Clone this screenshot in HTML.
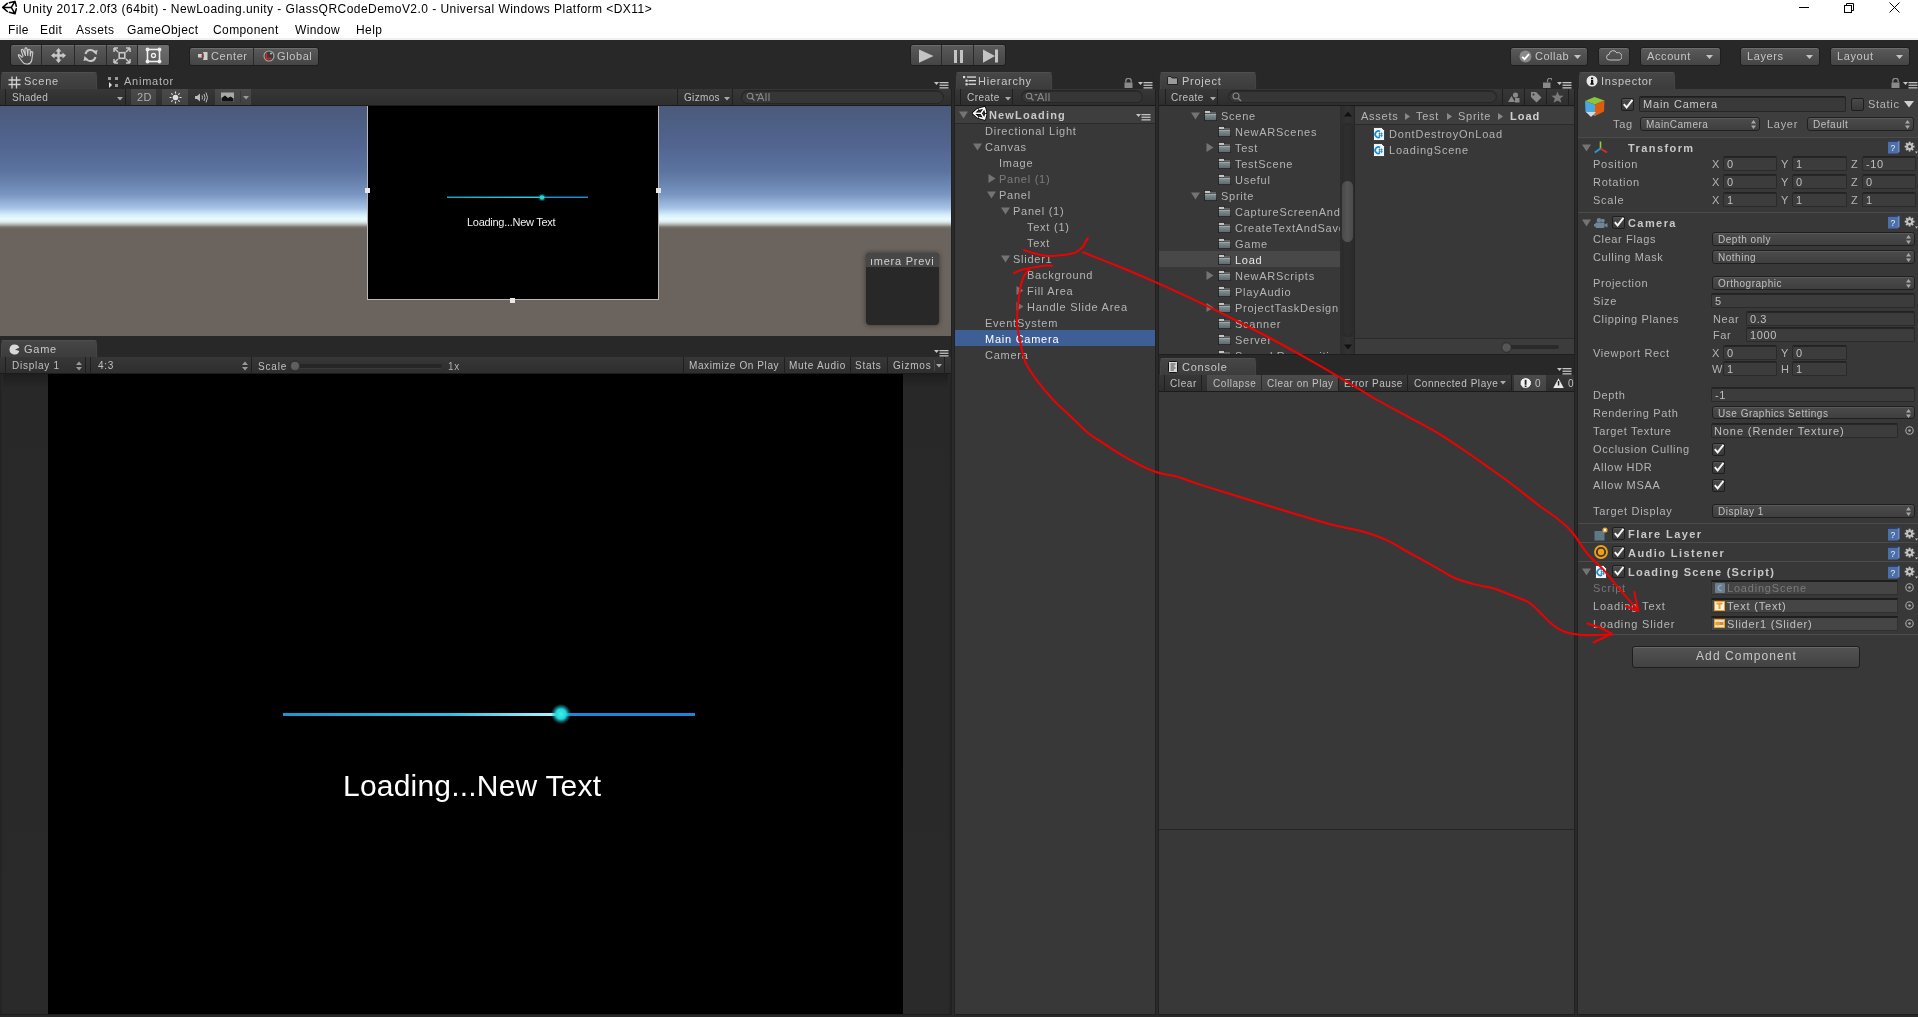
<!DOCTYPE html>
<html><head><meta charset="utf-8"><style>
*{margin:0;padding:0;box-sizing:border-box}
html,body{width:1918px;height:1017px;overflow:hidden}
body{position:relative;background:#282828;font-family:"Liberation Sans",sans-serif;}
.a{position:absolute}
.t{position:absolute;white-space:pre}
.btn{position:absolute;border:1px solid #1e1e1e;border-radius:3px;background:linear-gradient(#5a5a5a,#454545);box-shadow:inset 0 1px 0 rgba(255,255,255,0.12)}
.tab{position:absolute;height:17px;border-radius:4px 4px 0 0;background:linear-gradient(#464646,#3c3c3c);border:1px solid #2a2a2a;border-top-color:#4e4e4e;border-bottom:none;box-shadow:inset 1px 0 0 #444,inset -1px 0 0 #444}
.ptb{position:absolute;height:17px;background:linear-gradient(#373737,#2e2e2e);border-bottom:1px solid #1b1b1b}
.pbg{position:absolute;background:#383838}
.fld{position:absolute;background:#2f2f2f;border:1px solid #232323;border-radius:2px;box-shadow:inset 0 1px 0 #262626}
.pop{position:absolute;border:1px solid #1f1f1f;border-radius:3px;background:linear-gradient(#4b4b4b,#3f3f3f);box-shadow:inset 0 1px 0 rgba(255,255,255,0.08)}
</style></head><body>
<div class="a" style="left:0;top:0;width:1918px;height:1017px;overflow:hidden;will-change:transform">
<div class="a" style="left:0px;top:0px;width:1918px;height:40px;background:#fff"></div>
<div class="a" style="left:0px;top:38px;width:1918px;height:2px;background:#f0f0f0"></div>
<svg class="a" style="left:0px;top:0px;" width="20" height="16" viewBox="0 0 20 16"><path d="M2.7 7.4 L7.3 3.4 M9.3 2.7 L15 1.4 L16.3 6.2 M16.3 8.7 L15 13.8 L9.3 12.2 M7.3 11.5 L2.7 7.4 H11.3 L15 1.4 M11.3 7.4 L15 13.8" stroke="#000" stroke-width="1.5" fill="none" stroke-linecap="round" stroke-linejoin="round"/></svg>
<div class="t" style="left:23px;top:3px;font-size:12px;line-height:12px;color:#000;letter-spacing:0.46px;">Unity 2017.2.0f3 (64bit) - NewLoading.unity - GlassQRCodeDemoV2.0 - Universal Windows Platform &lt;DX11&gt;</div>
<div class="t" style="left:8px;top:24px;font-size:12px;line-height:12px;color:#000;letter-spacing:0.4px;">File</div>
<div class="t" style="left:40px;top:24px;font-size:12px;line-height:12px;color:#000;letter-spacing:0.4px;">Edit</div>
<div class="t" style="left:76px;top:24px;font-size:12px;line-height:12px;color:#000;letter-spacing:0.4px;">Assets</div>
<div class="t" style="left:127px;top:24px;font-size:12px;line-height:12px;color:#000;letter-spacing:0.4px;">GameObject</div>
<div class="t" style="left:213px;top:24px;font-size:12px;line-height:12px;color:#000;letter-spacing:0.4px;">Component</div>
<div class="t" style="left:295px;top:24px;font-size:12px;line-height:12px;color:#000;letter-spacing:0.4px;">Window</div>
<div class="t" style="left:356px;top:24px;font-size:12px;line-height:12px;color:#000;letter-spacing:0.4px;">Help</div>
<div class="a" style="left:1799px;top:7px;width:10px;height:1px;background:#000"></div>
<svg class="a" style="left:1843px;top:2px;" width="13" height="11" viewBox="0 0 13 11"><rect x="1.5" y="3.5" width="7" height="7" fill="none" stroke="#000"/><path d="M3.5 3.5 V1.5 H10.5 V8.5 H8.5" fill="none" stroke="#000"/></svg>
<svg class="a" style="left:1889px;top:2px;" width="12" height="11" viewBox="0 0 12 11"><path d="M0.5 0.5 L10.5 10.5 M10.5 0.5 L0.5 10.5" stroke="#000" stroke-width="1"/></svg>
<div class="a" style="left:0px;top:40px;width:1918px;height:32px;background:#282828"></div>
<div class="btn" style="left:10px;top:44px;width:160px;height:22px"></div>
<div class="a" style="left:138px;top:45px;width:31px;height:20px;background:linear-gradient(#6e6e6e,#5c5c5c);border-radius:0 2px 2px 0"></div>
<div class="a" style="left:41px;top:45px;width:1px;height:20px;background:#2a2a2a"></div>
<div class="a" style="left:74px;top:45px;width:1px;height:20px;background:#2a2a2a"></div>
<div class="a" style="left:106px;top:45px;width:1px;height:20px;background:#2a2a2a"></div>
<div class="a" style="left:137px;top:45px;width:1px;height:20px;background:#2a2a2a"></div>
<svg class="a" style="left:17px;top:47px;" width="17" height="18" viewBox="0 0 17 18"><path d="M5.5 10.5 L2.6 8 Q1.2 7 1.4 8.6 Q1.8 9.8 3 11.5 L5.6 15 Q7 17 9.3 17 H10.6 Q13.8 17 14.8 13 L15.8 6 Q15.8 4.5 14.8 4.6 Q14 4.7 13.8 6 L13.3 9 L13.2 3.3 Q13 2.1 12 2.2 Q11 2.3 11 3.5 L10.8 8.5 L10 1.9 Q9.8 0.8 8.8 0.9 Q7.8 1 7.9 2.2 L8.4 8.5 L6.3 3.2 Q5.8 2.2 4.9 2.5 Q4 2.9 4.4 4 L6.2 9.5" fill="none" stroke="#cfcfcf" stroke-width="1.1" stroke-linejoin="round"/></svg>
<svg class="a" style="left:50px;top:47px;" width="17" height="17" viewBox="0 0 17 17"><path d="M8.5 1 L11.5 4.5 H9.7 V7.3 H12.5 V5.5 L16 8.5 L12.5 11.5 V9.7 H9.7 V12.5 H11.5 L8.5 16 L5.5 12.5 H7.3 V9.7 H4.5 V11.5 L1 8.5 L4.5 5.5 V7.3 H7.3 V4.5 H5.5 Z" fill="#c8c8c8"/></svg>
<svg class="a" style="left:82px;top:47px;" width="17" height="17" viewBox="0 0 17 17"><path d="M3.5 7 A5.3 5.3 0 0 1 13 5.2" fill="none" stroke="#c8c8c8" stroke-width="2"/><path d="M13.5 10 A5.3 5.3 0 0 1 4 11.8" fill="none" stroke="#c8c8c8" stroke-width="2"/><path d="M10.5 4.2 L15.5 3 L14.5 8 Z M6.5 12.8 L1.5 14 L2.5 9 Z" fill="#c8c8c8"/></svg>
<svg class="a" style="left:113px;top:47px;" width="18" height="17" viewBox="0 0 18 17"><rect x="6.2" y="5.7" width="5.6" height="5.6" fill="none" stroke="#c8c8c8" stroke-width="1.6"/><path d="M1 1 H5 M1 1 V5 M17 1 H13 M17 1 V5 M1 16 H5 M1 16 V12 M17 16 H13 M17 16 V12 M1 1 L5 5 M17 1 L13 5 M1 16 L5 12 M17 16 L13 12" stroke="#c8c8c8" stroke-width="1.5"/></svg>
<svg class="a" style="left:145px;top:47px;" width="17" height="17" viewBox="0 0 17 17"><rect x="2.5" y="2.5" width="12" height="12" fill="none" stroke="#f0f0f0" stroke-width="1.6"/><circle cx="8.5" cy="8.5" r="2" fill="none" stroke="#f0f0f0" stroke-width="1.3"/><circle cx="2.5" cy="2.5" r="1.9" fill="#f0f0f0"/><circle cx="14.5" cy="2.5" r="1.9" fill="#f0f0f0"/><circle cx="2.5" cy="14.5" r="1.9" fill="#f0f0f0"/><circle cx="14.5" cy="14.5" r="1.9" fill="#f0f0f0"/></svg>
<div class="btn" style="left:189px;top:47px;width:130px;height:19px"></div>
<div class="a" style="left:253px;top:48px;width:1px;height:17px;background:#2a2a2a"></div>
<svg class="a" style="left:198px;top:52px;" width="10" height="9" viewBox="0 0 10 9"><rect x="0" y="2" width="4" height="3.5" fill="#d0d0d0"/><rect x="5" y="0" width="4.5" height="8" fill="#d0d0d0"/><rect x="5" y="0.8" width="1" height="6.4" fill="#888"/><rect x="3.6" y="2.6" width="2" height="2.4" fill="#c02020"/></svg>
<div class="t" style="left:211px;top:51px;font-size:11px;line-height:11px;color:#c4c4c4;letter-spacing:0.6px;">Center</div>
<svg class="a" style="left:263px;top:50px;" width="12" height="12" viewBox="0 0 12 12"><circle cx="6" cy="6" r="5" fill="#3a3a3a" stroke="#aaa" stroke-width="1.1"/><path d="M3.3 3 V8.5 H8.2" fill="none" stroke="#e02020" stroke-width="1.5"/><circle cx="8" cy="3.5" r="1" fill="#bbb"/></svg>
<div class="t" style="left:277px;top:51px;font-size:11px;line-height:11px;color:#c4c4c4;letter-spacing:0.6px;">Global</div>
<div class="btn" style="left:910px;top:44px;width:96px;height:22px"></div>
<div class="a" style="left:941px;top:45px;width:1px;height:20px;background:#2a2a2a"></div>
<div class="a" style="left:973px;top:45px;width:1px;height:20px;background:#2a2a2a"></div>
<svg class="a" style="left:918px;top:49px;" width="17" height="15" viewBox="0 0 17 15"><path d="M1 0.5 L15.5 7 L1 13.8 Z" fill="#c4c4c4"/></svg>
<div class="a" style="left:954px;top:50px;width:3px;height:13px;background:#c4c4c4"></div>
<div class="a" style="left:960px;top:50px;width:3px;height:13px;background:#c4c4c4"></div>
<svg class="a" style="left:982px;top:49px;" width="17" height="15" viewBox="0 0 17 15"><path d="M1 0.5 L13 7 L1 13.8 Z" fill="#c4c4c4"/><rect x="13" y="0.5" width="3" height="13" fill="#c4c4c4"/></svg>
<div class="btn" style="left:1510px;top:47px;width:78px;height:19px"></div>
<svg class="a" style="left:1519px;top:50px;" width="13" height="13" viewBox="0 0 13 13"><circle cx="6.5" cy="6.5" r="6" fill="#8a8a8a"/><path d="M3.2 6.8 L5.6 9.2 L10 4.2" fill="none" stroke="#fff" stroke-width="1.8"/></svg>
<div class="t" style="left:1535px;top:51px;font-size:11px;line-height:11px;color:#c4c4c4;letter-spacing:0.5px;">Collab</div>
<svg class="a" style="left:1574px;top:55px;" width="8" height="5" viewBox="0 0 8 5"><path d="M0 0 H7 L3.5 4 Z" fill="#c4c4c4"/></svg>
<div class="btn" style="left:1598px;top:47px;width:32px;height:19px"></div>
<svg class="a" style="left:1606px;top:50px;" width="16" height="11" viewBox="0 0 16 11"><path d="M3.5 10 a2.8 2.8 0 0 1 -0.3 -5.6 a4 4 0 0 1 7.6 -1.5 a3 3 0 0 1 2.5 7.1 Z" fill="none" stroke="#c4c4c4" stroke-width="1"/></svg>
<div class="btn" style="left:1640px;top:47px;width:81px;height:19px"></div>
<div class="t" style="left:1647px;top:51px;font-size:11px;line-height:11px;color:#c4c4c4;letter-spacing:0.6px;">Account</div>
<svg class="a" style="left:1706px;top:55px;" width="8" height="5" viewBox="0 0 8 5"><path d="M0 0 H7 L3.5 4 Z" fill="#c4c4c4"/></svg>
<div class="btn" style="left:1740px;top:47px;width:80px;height:19px"></div>
<div class="t" style="left:1747px;top:51px;font-size:11px;line-height:11px;color:#c4c4c4;letter-spacing:0.6px;">Layers</div>
<svg class="a" style="left:1806px;top:55px;" width="8" height="5" viewBox="0 0 8 5"><path d="M0 0 H7 L3.5 4 Z" fill="#c4c4c4"/></svg>
<div class="btn" style="left:1830px;top:47px;width:80px;height:19px"></div>
<div class="t" style="left:1837px;top:51px;font-size:11px;line-height:11px;color:#c4c4c4;letter-spacing:0.6px;">Layout</div>
<svg class="a" style="left:1896px;top:55px;" width="8" height="5" viewBox="0 0 8 5"><path d="M0 0 H7 L3.5 4 Z" fill="#c4c4c4"/></svg>
<div class="tab" style="left:0px;top:72px;width:98px"></div>
<svg class="a" style="left:8px;top:76px;" width="13" height="13" viewBox="0 0 13 13"><path d="M4 0.5 V12.5 M8.5 0.5 V12.5 M0.5 4 H12.5 M0.5 8.5 H12.5" stroke="#d0d0d0" stroke-width="1.3"/></svg>
<div class="t" style="left:24px;top:76px;font-size:11px;line-height:11px;color:#c8c8c8;letter-spacing:0.75px;">Scene</div>
<svg class="a" style="left:108px;top:77px;" width="11" height="12" viewBox="0 0 11 12"><rect x="0" y="0" width="3" height="3" fill="#9a9a9a"/><rect x="7" y="0" width="3" height="3" fill="#9a9a9a"/><rect x="7" y="7" width="3" height="3" fill="#9a9a9a"/><path d="M1 5 L4 8 L1 11 Z" fill="#ddd"/></svg>
<div class="t" style="left:124px;top:76px;font-size:11px;line-height:11px;color:#b8b8b8;letter-spacing:0.75px;">Animator</div>
<svg class="a" style="left:934px;top:81px;" width="15" height="8" viewBox="0 0 15 8"><path d="M0 1 H5 L2.5 4 Z" fill="#c4c4c4"/><rect x="5.5" y="1" width="9" height="1.3" fill="#c4c4c4"/><rect x="5.5" y="3.6" width="9" height="1.3" fill="#c4c4c4"/><rect x="5.5" y="6.2" width="9" height="1.3" fill="#c4c4c4"/></svg>
<div class="ptb" style="left:0;top:89px;width:951px"></div>
<div class="a" style="left:5px;top:89px;width:1px;height:17px;background:#1f1f1f"></div>
<div class="t" style="left:12px;top:93px;font-size:10px;line-height:10px;color:#c0c0c0;letter-spacing:0.25px;">Shaded</div>
<svg class="a" style="left:117px;top:97px;" width="7" height="4" viewBox="0 0 7 4"><path d="M0 0 H6 L3 3.5 Z" fill="#aaa"/></svg>
<div class="a" style="left:125px;top:89px;width:1px;height:17px;background:#1f1f1f"></div>
<div class="a" style="left:131px;top:89px;width:25px;height:16px;background:linear-gradient(#4a4a4a,#414141)"></div>
<div class="t" style="left:137px;top:92px;font-size:11px;line-height:11px;color:#b0b0b0;letter-spacing:0.5px;">2D</div>
<div class="a" style="left:162px;top:89px;width:26px;height:16px;background:linear-gradient(#4a4a4a,#414141)"></div>
<svg class="a" style="left:169px;top:91px;" width="13" height="13" viewBox="0 0 13 13"><circle cx="6.5" cy="6.5" r="2.8" fill="#e0e0e0"/><path d="M6.5 0.5 V2.5 M6.5 10.5 V12.5 M0.5 6.5 H2.5 M10.5 6.5 H12.5 M2.3 2.3 L3.7 3.7 M9.3 9.3 L10.7 10.7 M2.3 10.7 L3.7 9.3 M9.3 3.7 L10.7 2.3" stroke="#e0e0e0" stroke-width="1.2"/></svg>
<svg class="a" style="left:194px;top:91px;" width="14" height="13" viewBox="0 0 14 13"><path d="M1 5 H3 L6 2.5 V10.5 L3 8 H1 Z" fill="#bbb"/><path d="M8 4.5 Q9 6.5 8 8.5 M10 3 Q12 6.5 10 10 M12 1.5 Q15 6.5 12 11.5" fill="none" stroke="#bbb" stroke-width="1"/></svg>
<div class="a" style="left:215px;top:89px;width:36px;height:16px;background:linear-gradient(#4a4a4a,#414141)"></div>
<svg class="a" style="left:221px;top:92px;" width="13" height="10" viewBox="0 0 13 10"><rect x="0" y="0.5" width="13" height="9" fill="#a8a8a8"/><path d="M0.5 9.5 V6 L4 3.5 L7 6 L9.5 4.5 L12.5 6.5 V9.5 Z" fill="#111"/></svg>
<div class="a" style="left:240px;top:91px;width:1px;height:12px;background:#383838"></div>
<svg class="a" style="left:243px;top:96px;" width="7" height="4" viewBox="0 0 7 4"><path d="M0 0 H6 L3 3.5 Z" fill="#999"/></svg>
<div class="a" style="left:677px;top:89px;width:1px;height:17px;background:#1f1f1f"></div>
<div class="t" style="left:684px;top:93px;font-size:10px;line-height:10px;color:#c0c0c0;letter-spacing:0.33px;">Gizmos</div>
<svg class="a" style="left:724px;top:97px;" width="7" height="4" viewBox="0 0 7 4"><path d="M0 0 H6 L3 3.5 Z" fill="#aaa"/></svg>
<div class="a" style="left:732px;top:89px;width:1px;height:17px;background:#1f1f1f"></div>
<div class="a" style="left:741px;top:90px;width:203px;height:14px;background:#363636;border:1px solid #262626;border-radius:7px;box-shadow:inset 0 1px 0 #2a2a2a"></div>
<svg class="a" style="left:746px;top:92px;" width="13" height="9" viewBox="0 0 13 9"><circle cx="4" cy="4" r="2.8" fill="none" stroke="#888" stroke-width="1.1"/><path d="M6 6 L8.5 8.5" stroke="#888" stroke-width="1.3"/><path d="M9 2 H13 L11 4 Z" fill="#888"/></svg>
<div class="t" style="left:757px;top:92px;font-size:11px;line-height:11px;color:#8c8c8c;letter-spacing:0.5px;">All</div>
<div class="a" style="left:0px;top:106px;width:951px;height:230px;background:#6b635d"></div>
<div class="a" style="left:0px;top:106px;width:951px;height:124px;background:linear-gradient(#4a5a7b 0px,#526590 40px,#5c74a0 66px,#7894c0 88px,#a6c3e6 102px,#d6effb 109px,#e8fdff 113px,#dceaec 116px,#a8aaa8 119px,#7a726c 121px,#6b635d 123px)"></div>
<div class="a" style="left:367px;top:106px;width:292px;height:194px;background:#000;border:1px solid #b8b8b8;border-top:none"></div>
<div class="a" style="left:365px;top:188px;width:5px;height:5px;background:#e8e8e8"></div>
<div class="a" style="left:656px;top:188px;width:5px;height:5px;background:#e8e8e8"></div>
<div class="a" style="left:510px;top:298px;width:5px;height:5px;background:#e8e8e8"></div>
<div class="a" style="left:447px;top:197px;width:141px;height:1px;background:linear-gradient(90deg,#16a6c8,#2bd0e8 90px,#1e8fd0 96px,#1e8fd0)"></div>
<div class="a" style="left:447px;top:196px;width:141px;height:1px;opacity:0.45;background:linear-gradient(90deg,#16a6c8,#2bd0e8 90px,#1e8fd0 96px,#1e8fd0)"></div>
<svg class="a" style="left:538px;top:193px;" width="8" height="9" viewBox="0 0 8 9"><circle cx="4" cy="4.5" r="2.3" fill="#30e0e0"/><circle cx="4" cy="4.5" r="3.6" fill="#20c0c0" opacity="0.35"/></svg>
<div class="t" style="left:467px;top:217px;font-size:11px;line-height:11px;color:#f0f0f0;letter-spacing:-0.28px;">Loading...New Text</div>
<div class="a" style="left:866px;top:253px;width:73px;height:72px;background:#282828;border-radius:4px;box-shadow:0 0 4px 1px rgba(0,0,0,0.35)"></div>
<div class="a" style="left:866px;top:253px;width:73px;height:14px;background:#474747;border-radius:4px 4px 0 0"></div>
<div class="t" style="left:870px;top:256px;font-size:11px;line-height:11px;color:#d0d0d0;letter-spacing:0.75px;">ımera Previ</div>
<div class="tab" style="left:0px;top:340px;width:98px"></div>
<svg class="a" style="left:9px;top:344px;" width="11" height="11" viewBox="0 0 11 11"><path d="M5.5 0.5 A5 5 0 1 0 10.3 7 L6 5.5 L10.3 3.8 A5 5 0 0 0 5.5 0.5 Z" fill="#d8d8d8"/></svg>
<div class="t" style="left:24px;top:344px;font-size:11px;line-height:11px;color:#c8c8c8;letter-spacing:0.75px;">Game</div>
<svg class="a" style="left:934px;top:349px;" width="15" height="8" viewBox="0 0 15 8"><path d="M0 1 H5 L2.5 4 Z" fill="#c4c4c4"/><rect x="5.5" y="1" width="9" height="1.3" fill="#c4c4c4"/><rect x="5.5" y="3.6" width="9" height="1.3" fill="#c4c4c4"/><rect x="5.5" y="6.2" width="9" height="1.3" fill="#c4c4c4"/></svg>
<div class="ptb" style="left:0;top:357px;width:951px"></div>
<div class="a" style="left:5px;top:357px;width:1px;height:17px;background:#1f1f1f"></div>
<div class="t" style="left:12px;top:361px;font-size:10px;line-height:10px;color:#c0c0c0;letter-spacing:0.75px;">Display 1</div>
<svg class="a" style="left:76px;top:361px;" width="6" height="10" viewBox="0 0 6 10"><path d="M0 4 L3 0.5 L6 4 Z M0 6 L3 9.5 L6 6 Z" fill="#999"/></svg>
<div class="a" style="left:85px;top:357px;width:1px;height:17px;background:#1f1f1f"></div>
<div class="a" style="left:90px;top:357px;width:1px;height:17px;background:#1f1f1f"></div>
<div class="t" style="left:98px;top:361px;font-size:10px;line-height:10px;color:#c0c0c0;letter-spacing:0.75px;">4:3</div>
<svg class="a" style="left:242px;top:361px;" width="6" height="10" viewBox="0 0 6 10"><path d="M0 4 L3 0.5 L6 4 Z M0 6 L3 9.5 L6 6 Z" fill="#999"/></svg>
<div class="a" style="left:251px;top:357px;width:1px;height:17px;background:#1f1f1f"></div>
<div class="t" style="left:258px;top:362px;font-size:10px;line-height:10px;color:#c0c0c0;letter-spacing:0.85px;">Scale</div>
<div class="a" style="left:293px;top:364px;width:149px;height:4px;background:#262626;border-radius:2px;box-shadow:0 1px 0 #3a3a3a"></div>
<svg class="a" style="left:289px;top:360px;" width="12" height="12" viewBox="0 0 12 12"><circle cx="6" cy="6" r="5" fill="#575757" stroke="#262626"/><circle cx="6" cy="5.5" r="3.5" fill="#5f5f5f"/></svg>
<div class="t" style="left:448px;top:362px;font-size:10px;line-height:10px;color:#b0b0b0;letter-spacing:0.6px;">1x</div>
<div class="a" style="left:683px;top:357px;width:1px;height:17px;background:#1f1f1f"></div>
<div class="a" style="left:784px;top:357px;width:1px;height:17px;background:#1f1f1f"></div>
<div class="a" style="left:850px;top:357px;width:1px;height:17px;background:#1f1f1f"></div>
<div class="a" style="left:887px;top:357px;width:1px;height:17px;background:#1f1f1f"></div>
<div class="a" style="left:934px;top:360px;width:1px;height:11px;background:#4a4a4a"></div>
<div class="t" style="left:689px;top:361px;font-size:10px;line-height:10px;color:#c0c0c0;letter-spacing:0.6px;">Maximize On Play</div>
<div class="t" style="left:789px;top:361px;font-size:10px;line-height:10px;color:#c0c0c0;letter-spacing:0.7px;">Mute Audio</div>
<div class="t" style="left:855px;top:361px;font-size:10px;line-height:10px;color:#c0c0c0;letter-spacing:0.75px;">Stats</div>
<div class="t" style="left:893px;top:361px;font-size:10px;line-height:10px;color:#c0c0c0;letter-spacing:0.75px;">Gizmos</div>
<svg class="a" style="left:936px;top:364px;" width="7" height="4" viewBox="0 0 7 4"><path d="M0 0 H6 L3 3.5 Z" fill="#aaa"/></svg>
<div class="a" style="left:944px;top:357px;width:1px;height:17px;background:#1f1f1f"></div>
<div class="a" style="left:0px;top:374px;width:951px;height:640px;background:linear-gradient(#1e1e1e,#282828 14px,#2a2a2a)"></div>
<div class="a" style="left:0px;top:374px;width:3px;height:640px;background:linear-gradient(90deg,#222,#2a2a2a)"></div>
<div class="a" style="left:948px;top:374px;width:3px;height:640px;background:linear-gradient(90deg,#2a2a2a,#222)"></div>
<div class="a" style="left:48px;top:374px;width:855px;height:640px;background:#000"></div>
<div class="a" style="left:0px;top:1014px;width:951px;height:1px;background:#1e1e1e"></div>
<div class="a" style="left:283px;top:713px;width:278px;height:3px;background:linear-gradient(90deg,#1898d0,#2cc0e8 60%,#a8f4ff 97%,#6ff 100%)"></div>
<div class="a" style="left:561px;top:713px;width:134px;height:3px;background:#1e86d8"></div>
<div class="a" style="left:551px;top:704px;width:20px;height:20px;border-radius:50%;background:radial-gradient(circle,#3ff0f0 0,#22d8d8 35%,rgba(20,180,200,0.45) 55%,rgba(0,0,0,0) 72%)"></div>
<div class="t" style="left:343px;top:771px;font-size:30px;line-height:30px;color:#ffffff;letter-spacing:0.2px;">Loading...New Text</div>
<div class="a" style="left:951px;top:89px;width:4px;height:926px;background:#2a2a2a"></div>
<div class="a" style="left:951px;top:89px;width:1px;height:926px;background:#202020"></div>
<div class="a" style="left:954px;top:89px;width:1px;height:926px;background:#202020"></div>
<div class="tab" style="left:955px;top:72px;width:98px"></div>
<svg class="a" style="left:963px;top:76px;" width="13" height="10" viewBox="0 0 13 10"><rect x="0" y="0" width="2.2" height="2.2" fill="#ddd"/><rect x="2.5" y="3.6" width="2.2" height="2.2" fill="#ddd"/><rect x="2.5" y="7.2" width="2.2" height="2.2" fill="#ddd"/><rect x="4" y="0.4" width="9" height="1.3" fill="#ddd"/><rect x="5.5" y="4" width="7.5" height="1.3" fill="#ddd"/><rect x="5.5" y="7.6" width="7.5" height="1.3" fill="#ddd"/></svg>
<div class="t" style="left:978px;top:76px;font-size:11px;line-height:11px;color:#c8c8c8;letter-spacing:0.75px;">Hierarchy</div>
<svg class="a" style="left:1124px;top:78px;" width="9" height="10" viewBox="0 0 9 10"><path d="M1.8 4.5 V3 a2.7 2.7 0 0 1 5.4 0 V4.5" fill="none" stroke="#8a8a8a" stroke-width="1.3"/><rect x="0.5" y="4.5" width="8" height="5.5" fill="#8a8a8a"/></svg>
<svg class="a" style="left:1138px;top:81px;" width="15" height="8" viewBox="0 0 15 8"><path d="M0 1 H5 L2.5 4 Z" fill="#c4c4c4"/><rect x="5.5" y="1" width="9" height="1.3" fill="#c4c4c4"/><rect x="5.5" y="3.6" width="9" height="1.3" fill="#c4c4c4"/><rect x="5.5" y="6.2" width="9" height="1.3" fill="#c4c4c4"/></svg>
<div class="ptb" style="left:955px;top:89px;width:200px"></div>
<div class="a" style="left:960px;top:89px;width:1px;height:17px;background:#1f1f1f"></div>
<div class="a" style="left:1012px;top:89px;width:1px;height:17px;background:#1f1f1f"></div>
<div class="t" style="left:967px;top:93px;font-size:10px;line-height:10px;color:#c0c0c0;letter-spacing:0.47px;">Create</div>
<svg class="a" style="left:1005px;top:97px;" width="7" height="4" viewBox="0 0 7 4"><path d="M0 0 H6 L3 3.5 Z" fill="#aaa"/></svg>
<div class="a" style="left:1021px;top:90px;width:122px;height:13px;background:#363636;border:1px solid #262626;border-radius:7px;box-shadow:inset 0 1px 0 #2a2a2a"></div>
<svg class="a" style="left:1025px;top:92px;" width="13" height="9" viewBox="0 0 13 9"><circle cx="4" cy="4" r="2.8" fill="none" stroke="#888" stroke-width="1.1"/><path d="M6 6 L8.5 8.5" stroke="#888" stroke-width="1.3"/><path d="M9 2 H13 L11 4 Z" fill="#888"/></svg>
<div class="t" style="left:1037px;top:92px;font-size:11px;line-height:11px;color:#8c8c8c;letter-spacing:0.5px;">All</div>
<div class="a" style="left:955px;top:106px;width:200px;height:908px;background:#383838"></div>
<div class="a" style="left:955px;top:1014px;width:200px;height:1px;background:#1e1e1e"></div>
<div class="a" style="left:955px;top:106px;width:200px;height:17px;background:#3e3e3e"></div>
<div class="a" style="left:955px;top:123px;width:200px;height:1px;background:#2a2a2a"></div>
<svg class="a" style="left:959px;top:111px;" width="9" height="8" viewBox="0 0 9 8"><path d="M0 0.5 H9 L4.5 7.5 Z" fill="#747474"/></svg>
<svg class="a" style="left:971px;top:106px;" width="17" height="16" viewBox="0 0 17 16"><g fill="none" stroke-linecap="round" stroke-linejoin="round" transform="translate(0,0.6) scale(0.9)"><path d="M2.7 7.4 L7.3 3.4 M9.3 2.7 L15 1.4 L16.3 6.2 M16.3 8.7 L15 13.8 L9.3 12.2 M7.3 11.5 L2.7 7.4 H11.3 L15 1.4 M11.3 7.4 L15 13.8" stroke="#000" stroke-width="3.4"/><path d="M2.7 7.4 L7.3 3.4 M9.3 2.7 L15 1.4 L16.3 6.2 M16.3 8.7 L15 13.8 L9.3 12.2 M7.3 11.5 L2.7 7.4 H11.3 L15 1.4 M11.3 7.4 L15 13.8" stroke="#fff" stroke-width="1.7"/></g></svg>
<div class="t" style="left:989px;top:110px;font-size:11px;line-height:11px;color:#c8c8c8;letter-spacing:1.15px;font-weight:bold;">NewLoading</div>
<svg class="a" style="left:1136px;top:113px;" width="15" height="8" viewBox="0 0 15 8"><path d="M0 1 H5 L2.5 4 Z" fill="#c4c4c4"/><rect x="5.5" y="1" width="9" height="1.3" fill="#c4c4c4"/><rect x="5.5" y="3.6" width="9" height="1.3" fill="#c4c4c4"/><rect x="5.5" y="6.2" width="9" height="1.3" fill="#c4c4c4"/></svg>
<div class="t" style="left:985px;top:126px;font-size:11px;line-height:11px;color:#b4b4b4;letter-spacing:0.75px;">Directional Light</div>
<svg class="a" style="left:973px;top:143px;" width="9" height="8" viewBox="0 0 9 8"><path d="M0 0.5 H9 L4.5 7.5 Z" fill="#747474"/></svg>
<div class="t" style="left:985px;top:142px;font-size:11px;line-height:11px;color:#b4b4b4;letter-spacing:0.75px;">Canvas</div>
<div class="t" style="left:999px;top:158px;font-size:11px;line-height:11px;color:#b4b4b4;letter-spacing:0.75px;">Image</div>
<svg class="a" style="left:988px;top:174px;" width="8" height="9" viewBox="0 0 8 9"><path d="M0.5 0 L7.5 4.5 L0.5 9 Z" fill="#747474"/></svg>
<div class="t" style="left:999px;top:174px;font-size:11px;line-height:11px;color:#7c7c7c;letter-spacing:0.75px;">Panel (1)</div>
<svg class="a" style="left:987px;top:191px;" width="9" height="8" viewBox="0 0 9 8"><path d="M0 0.5 H9 L4.5 7.5 Z" fill="#747474"/></svg>
<div class="t" style="left:999px;top:190px;font-size:11px;line-height:11px;color:#b4b4b4;letter-spacing:0.75px;">Panel</div>
<svg class="a" style="left:1001px;top:207px;" width="9" height="8" viewBox="0 0 9 8"><path d="M0 0.5 H9 L4.5 7.5 Z" fill="#747474"/></svg>
<div class="t" style="left:1013px;top:206px;font-size:11px;line-height:11px;color:#b4b4b4;letter-spacing:0.75px;">Panel (1)</div>
<div class="t" style="left:1027px;top:222px;font-size:11px;line-height:11px;color:#b4b4b4;letter-spacing:0.75px;">Text (1)</div>
<div class="t" style="left:1027px;top:238px;font-size:11px;line-height:11px;color:#b4b4b4;letter-spacing:0.75px;">Text</div>
<svg class="a" style="left:1001px;top:255px;" width="9" height="8" viewBox="0 0 9 8"><path d="M0 0.5 H9 L4.5 7.5 Z" fill="#747474"/></svg>
<div class="t" style="left:1013px;top:254px;font-size:11px;line-height:11px;color:#b4b4b4;letter-spacing:0.75px;">Slider1</div>
<div class="t" style="left:1027px;top:270px;font-size:11px;line-height:11px;color:#b4b4b4;letter-spacing:0.75px;">Background</div>
<svg class="a" style="left:1016px;top:286px;" width="8" height="9" viewBox="0 0 8 9"><path d="M0.5 0 L7.5 4.5 L0.5 9 Z" fill="#747474"/></svg>
<div class="t" style="left:1027px;top:286px;font-size:11px;line-height:11px;color:#b4b4b4;letter-spacing:0.75px;">Fill Area</div>
<svg class="a" style="left:1016px;top:302px;" width="8" height="9" viewBox="0 0 8 9"><path d="M0.5 0 L7.5 4.5 L0.5 9 Z" fill="#747474"/></svg>
<div class="t" style="left:1027px;top:302px;font-size:11px;line-height:11px;color:#b4b4b4;letter-spacing:0.75px;">Handle Slide Area</div>
<div class="t" style="left:985px;top:318px;font-size:11px;line-height:11px;color:#b4b4b4;letter-spacing:0.75px;">EventSystem</div>
<div class="a" style="left:955px;top:330px;width:200px;height:16px;background:#3d5f96"></div>
<div class="t" style="left:985px;top:334px;font-size:11px;line-height:11px;color:#ffffff;letter-spacing:0.75px;">Main Camera</div>
<div class="t" style="left:985px;top:350px;font-size:11px;line-height:11px;color:#b4b4b4;letter-spacing:0.75px;">Camera</div>
<div class="a" style="left:1155px;top:89px;width:4px;height:926px;background:#2a2a2a"></div>
<div class="a" style="left:1155px;top:89px;width:1px;height:926px;background:#202020"></div>
<div class="a" style="left:1158px;top:89px;width:1px;height:926px;background:#202020"></div>
<div class="tab" style="left:1159px;top:72px;width:98px"></div>
<svg class="a" style="left:1167px;top:76px;" width="11" height="9" viewBox="0 0 11 9"><path d="M0.5 1.5 a1 1 0 0 1 1 -1 H4 L5 2 H10 a0.5 0.5 0 0 1 0.5 0.5 V8.5 H0.5 Z" fill="#9a9a9a" stroke="#111" stroke-width="0.8"/></svg>
<div class="t" style="left:1182px;top:76px;font-size:11px;line-height:11px;color:#c8c8c8;letter-spacing:0.75px;">Project</div>
<svg class="a" style="left:1543px;top:78px;" width="9" height="10" viewBox="0 0 9 10"><path d="M4.5 4 V2.5 a2.3 2.3 0 0 1 4.6 0" fill="none" stroke="#8a8a8a" stroke-width="1.2"/><rect x="0" y="4.5" width="7.5" height="5.5" fill="#8a8a8a"/></svg>
<svg class="a" style="left:1557px;top:81px;" width="15" height="8" viewBox="0 0 15 8"><path d="M0 1 H5 L2.5 4 Z" fill="#c4c4c4"/><rect x="5.5" y="1" width="9" height="1.3" fill="#c4c4c4"/><rect x="5.5" y="3.6" width="9" height="1.3" fill="#c4c4c4"/><rect x="5.5" y="6.2" width="9" height="1.3" fill="#c4c4c4"/></svg>
<div class="ptb" style="left:1159px;top:89px;width:415px"></div>
<div class="a" style="left:1165px;top:89px;width:1px;height:17px;background:#1f1f1f"></div>
<div class="a" style="left:1217px;top:89px;width:1px;height:17px;background:#1f1f1f"></div>
<div class="t" style="left:1171px;top:93px;font-size:10px;line-height:10px;color:#c0c0c0;letter-spacing:0.47px;">Create</div>
<svg class="a" style="left:1210px;top:97px;" width="7" height="4" viewBox="0 0 7 4"><path d="M0 0 H6 L3 3.5 Z" fill="#aaa"/></svg>
<div class="a" style="left:1228px;top:90px;width:269px;height:13px;background:#363636;border:1px solid #262626;border-radius:7px;box-shadow:inset 0 1px 0 #2a2a2a"></div>
<svg class="a" style="left:1232px;top:92px;" width="10" height="10" viewBox="0 0 10 10"><circle cx="4" cy="4" r="3" fill="none" stroke="#888" stroke-width="1.1"/><path d="M6.2 6.2 L9 9" stroke="#888" stroke-width="1.4"/></svg>
<div class="a" style="left:1502px;top:89px;width:1px;height:17px;background:#1f1f1f"></div>
<div class="a" style="left:1524px;top:89px;width:1px;height:17px;background:#1f1f1f"></div>
<div class="a" style="left:1546px;top:89px;width:1px;height:17px;background:#1f1f1f"></div>
<div class="a" style="left:1568px;top:89px;width:1px;height:17px;background:#1f1f1f"></div>
<svg class="a" style="left:1508px;top:92px;" width="12" height="11" viewBox="0 0 12 11"><path d="M0 10 L3.5 4 L7 10 Z" fill="#8a8a8a"/><circle cx="7.5" cy="3" r="2.6" fill="#8a8a8a"/><rect x="7" y="6" width="4.5" height="4.5" fill="#8a8a8a"/></svg>
<svg class="a" style="left:1530px;top:91px;" width="12" height="12" viewBox="0 0 12 12"><path d="M1 1 H6 L11.5 6.5 L6.5 11.5 L1 6 Z" fill="#8a8a8a"/><circle cx="3.5" cy="3.5" r="1" fill="#2e2e2e"/></svg>
<svg class="a" style="left:1551px;top:91px;" width="13" height="12" viewBox="0 0 13 12"><path d="M6.5 0.5 L8.2 4.6 L12.6 4.8 L9.2 7.6 L10.4 11.8 L6.5 9.4 L2.6 11.8 L3.8 7.6 L0.4 4.8 L4.8 4.6 Z" fill="#7a7a7a"/></svg>
<div class="a" style="left:1159px;top:106px;width:415px;height:248px;background:#383838"></div>
<div class="a" style="left:1159px;top:106px;width:181px;height:248px;overflow:hidden">
<svg class="a" style="left:32px;top:6px;" width="9" height="8" viewBox="0 0 9 8"><path d="M0 0.5 H9 L4.5 7.5 Z" fill="#747474"/></svg>
<svg class="a" style="left:44px;top:3px;" width="15" height="13" viewBox="0 0 15 13"><defs><linearGradient id="fg" x1="0" y1="0" x2="0" y2="1"><stop offset="0" stop-color="#7f8d91"/><stop offset="1" stop-color="#5d696c"/></linearGradient></defs><path d="M1 2 Q1 1 2 1 H7 Q8 1 8 2 V3 H13 Q14 3 14 4 V11 Q14 12 13 12 H2 Q1 12 1 11 Z" fill="#141414"/><rect x="1.8" y="1.8" width="5.4" height="2.6" fill="#c4c4c4"/><rect x="7.2" y="3.6" width="6.1" height="1" fill="#d6d6d6"/><rect x="1.8" y="4.4" width="11.5" height="0.7" fill="#3c4446"/><rect x="1.8" y="5.1" width="11.5" height="0.9" fill="#a8b8bc"/><rect x="1.8" y="6" width="11.5" height="5.3" fill="url(#fg)"/></svg>
<div class="t" style="left:62px;top:5px;font-size:11px;line-height:11px;color:#b4b4b4;letter-spacing:0.75px;">Scene</div>
<svg class="a" style="left:58px;top:19px;" width="15" height="13" viewBox="0 0 15 13"><defs><linearGradient id="fg" x1="0" y1="0" x2="0" y2="1"><stop offset="0" stop-color="#7f8d91"/><stop offset="1" stop-color="#5d696c"/></linearGradient></defs><path d="M1 2 Q1 1 2 1 H7 Q8 1 8 2 V3 H13 Q14 3 14 4 V11 Q14 12 13 12 H2 Q1 12 1 11 Z" fill="#141414"/><rect x="1.8" y="1.8" width="5.4" height="2.6" fill="#c4c4c4"/><rect x="7.2" y="3.6" width="6.1" height="1" fill="#d6d6d6"/><rect x="1.8" y="4.4" width="11.5" height="0.7" fill="#3c4446"/><rect x="1.8" y="5.1" width="11.5" height="0.9" fill="#a8b8bc"/><rect x="1.8" y="6" width="11.5" height="5.3" fill="url(#fg)"/></svg>
<div class="t" style="left:76px;top:21px;font-size:11px;line-height:11px;color:#b4b4b4;letter-spacing:0.75px;">NewARScenes</div>
<svg class="a" style="left:47px;top:37px;" width="8" height="9" viewBox="0 0 8 9"><path d="M0.5 0 L7.5 4.5 L0.5 9 Z" fill="#747474"/></svg>
<svg class="a" style="left:58px;top:35px;" width="15" height="13" viewBox="0 0 15 13"><defs><linearGradient id="fg" x1="0" y1="0" x2="0" y2="1"><stop offset="0" stop-color="#7f8d91"/><stop offset="1" stop-color="#5d696c"/></linearGradient></defs><path d="M1 2 Q1 1 2 1 H7 Q8 1 8 2 V3 H13 Q14 3 14 4 V11 Q14 12 13 12 H2 Q1 12 1 11 Z" fill="#141414"/><rect x="1.8" y="1.8" width="5.4" height="2.6" fill="#c4c4c4"/><rect x="7.2" y="3.6" width="6.1" height="1" fill="#d6d6d6"/><rect x="1.8" y="4.4" width="11.5" height="0.7" fill="#3c4446"/><rect x="1.8" y="5.1" width="11.5" height="0.9" fill="#a8b8bc"/><rect x="1.8" y="6" width="11.5" height="5.3" fill="url(#fg)"/></svg>
<div class="t" style="left:76px;top:37px;font-size:11px;line-height:11px;color:#b4b4b4;letter-spacing:0.75px;">Test</div>
<svg class="a" style="left:58px;top:51px;" width="15" height="13" viewBox="0 0 15 13"><defs><linearGradient id="fg" x1="0" y1="0" x2="0" y2="1"><stop offset="0" stop-color="#7f8d91"/><stop offset="1" stop-color="#5d696c"/></linearGradient></defs><path d="M1 2 Q1 1 2 1 H7 Q8 1 8 2 V3 H13 Q14 3 14 4 V11 Q14 12 13 12 H2 Q1 12 1 11 Z" fill="#141414"/><rect x="1.8" y="1.8" width="5.4" height="2.6" fill="#c4c4c4"/><rect x="7.2" y="3.6" width="6.1" height="1" fill="#d6d6d6"/><rect x="1.8" y="4.4" width="11.5" height="0.7" fill="#3c4446"/><rect x="1.8" y="5.1" width="11.5" height="0.9" fill="#a8b8bc"/><rect x="1.8" y="6" width="11.5" height="5.3" fill="url(#fg)"/></svg>
<div class="t" style="left:76px;top:53px;font-size:11px;line-height:11px;color:#b4b4b4;letter-spacing:0.75px;">TestScene</div>
<svg class="a" style="left:58px;top:67px;" width="15" height="13" viewBox="0 0 15 13"><defs><linearGradient id="fg" x1="0" y1="0" x2="0" y2="1"><stop offset="0" stop-color="#7f8d91"/><stop offset="1" stop-color="#5d696c"/></linearGradient></defs><path d="M1 2 Q1 1 2 1 H7 Q8 1 8 2 V3 H13 Q14 3 14 4 V11 Q14 12 13 12 H2 Q1 12 1 11 Z" fill="#141414"/><rect x="1.8" y="1.8" width="5.4" height="2.6" fill="#c4c4c4"/><rect x="7.2" y="3.6" width="6.1" height="1" fill="#d6d6d6"/><rect x="1.8" y="4.4" width="11.5" height="0.7" fill="#3c4446"/><rect x="1.8" y="5.1" width="11.5" height="0.9" fill="#a8b8bc"/><rect x="1.8" y="6" width="11.5" height="5.3" fill="url(#fg)"/></svg>
<div class="t" style="left:76px;top:69px;font-size:11px;line-height:11px;color:#b4b4b4;letter-spacing:0.75px;">Useful</div>
<svg class="a" style="left:32px;top:86px;" width="9" height="8" viewBox="0 0 9 8"><path d="M0 0.5 H9 L4.5 7.5 Z" fill="#747474"/></svg>
<svg class="a" style="left:44px;top:83px;" width="15" height="13" viewBox="0 0 15 13"><defs><linearGradient id="fg" x1="0" y1="0" x2="0" y2="1"><stop offset="0" stop-color="#7f8d91"/><stop offset="1" stop-color="#5d696c"/></linearGradient></defs><path d="M1 2 Q1 1 2 1 H7 Q8 1 8 2 V3 H13 Q14 3 14 4 V11 Q14 12 13 12 H2 Q1 12 1 11 Z" fill="#141414"/><rect x="1.8" y="1.8" width="5.4" height="2.6" fill="#c4c4c4"/><rect x="7.2" y="3.6" width="6.1" height="1" fill="#d6d6d6"/><rect x="1.8" y="4.4" width="11.5" height="0.7" fill="#3c4446"/><rect x="1.8" y="5.1" width="11.5" height="0.9" fill="#a8b8bc"/><rect x="1.8" y="6" width="11.5" height="5.3" fill="url(#fg)"/></svg>
<div class="t" style="left:62px;top:85px;font-size:11px;line-height:11px;color:#b4b4b4;letter-spacing:0.75px;">Sprite</div>
<svg class="a" style="left:58px;top:99px;" width="15" height="13" viewBox="0 0 15 13"><defs><linearGradient id="fg" x1="0" y1="0" x2="0" y2="1"><stop offset="0" stop-color="#7f8d91"/><stop offset="1" stop-color="#5d696c"/></linearGradient></defs><path d="M1 2 Q1 1 2 1 H7 Q8 1 8 2 V3 H13 Q14 3 14 4 V11 Q14 12 13 12 H2 Q1 12 1 11 Z" fill="#141414"/><rect x="1.8" y="1.8" width="5.4" height="2.6" fill="#c4c4c4"/><rect x="7.2" y="3.6" width="6.1" height="1" fill="#d6d6d6"/><rect x="1.8" y="4.4" width="11.5" height="0.7" fill="#3c4446"/><rect x="1.8" y="5.1" width="11.5" height="0.9" fill="#a8b8bc"/><rect x="1.8" y="6" width="11.5" height="5.3" fill="url(#fg)"/></svg>
<div class="t" style="left:76px;top:101px;font-size:11px;line-height:11px;color:#b4b4b4;letter-spacing:0.75px;">CaptureScreenAndSave</div>
<svg class="a" style="left:58px;top:115px;" width="15" height="13" viewBox="0 0 15 13"><defs><linearGradient id="fg" x1="0" y1="0" x2="0" y2="1"><stop offset="0" stop-color="#7f8d91"/><stop offset="1" stop-color="#5d696c"/></linearGradient></defs><path d="M1 2 Q1 1 2 1 H7 Q8 1 8 2 V3 H13 Q14 3 14 4 V11 Q14 12 13 12 H2 Q1 12 1 11 Z" fill="#141414"/><rect x="1.8" y="1.8" width="5.4" height="2.6" fill="#c4c4c4"/><rect x="7.2" y="3.6" width="6.1" height="1" fill="#d6d6d6"/><rect x="1.8" y="4.4" width="11.5" height="0.7" fill="#3c4446"/><rect x="1.8" y="5.1" width="11.5" height="0.9" fill="#a8b8bc"/><rect x="1.8" y="6" width="11.5" height="5.3" fill="url(#fg)"/></svg>
<div class="t" style="left:76px;top:117px;font-size:11px;line-height:11px;color:#b4b4b4;letter-spacing:0.75px;">CreateTextAndSave</div>
<svg class="a" style="left:58px;top:131px;" width="15" height="13" viewBox="0 0 15 13"><defs><linearGradient id="fg" x1="0" y1="0" x2="0" y2="1"><stop offset="0" stop-color="#7f8d91"/><stop offset="1" stop-color="#5d696c"/></linearGradient></defs><path d="M1 2 Q1 1 2 1 H7 Q8 1 8 2 V3 H13 Q14 3 14 4 V11 Q14 12 13 12 H2 Q1 12 1 11 Z" fill="#141414"/><rect x="1.8" y="1.8" width="5.4" height="2.6" fill="#c4c4c4"/><rect x="7.2" y="3.6" width="6.1" height="1" fill="#d6d6d6"/><rect x="1.8" y="4.4" width="11.5" height="0.7" fill="#3c4446"/><rect x="1.8" y="5.1" width="11.5" height="0.9" fill="#a8b8bc"/><rect x="1.8" y="6" width="11.5" height="5.3" fill="url(#fg)"/></svg>
<div class="t" style="left:76px;top:133px;font-size:11px;line-height:11px;color:#b4b4b4;letter-spacing:0.75px;">Game</div>
<div class="a" style="left:0px;top:145px;width:181px;height:16px;background:#484848"></div>
<svg class="a" style="left:58px;top:147px;" width="15" height="13" viewBox="0 0 15 13"><defs><linearGradient id="fg" x1="0" y1="0" x2="0" y2="1"><stop offset="0" stop-color="#7f8d91"/><stop offset="1" stop-color="#5d696c"/></linearGradient></defs><path d="M1 2 Q1 1 2 1 H7 Q8 1 8 2 V3 H13 Q14 3 14 4 V11 Q14 12 13 12 H2 Q1 12 1 11 Z" fill="#141414"/><rect x="1.8" y="1.8" width="5.4" height="2.6" fill="#c4c4c4"/><rect x="7.2" y="3.6" width="6.1" height="1" fill="#d6d6d6"/><rect x="1.8" y="4.4" width="11.5" height="0.7" fill="#3c4446"/><rect x="1.8" y="5.1" width="11.5" height="0.9" fill="#a8b8bc"/><rect x="1.8" y="6" width="11.5" height="5.3" fill="url(#fg)"/></svg>
<div class="t" style="left:76px;top:149px;font-size:11px;line-height:11px;color:#e8e8e8;letter-spacing:0.75px;">Load</div>
<svg class="a" style="left:47px;top:165px;" width="8" height="9" viewBox="0 0 8 9"><path d="M0.5 0 L7.5 4.5 L0.5 9 Z" fill="#747474"/></svg>
<svg class="a" style="left:58px;top:163px;" width="15" height="13" viewBox="0 0 15 13"><defs><linearGradient id="fg" x1="0" y1="0" x2="0" y2="1"><stop offset="0" stop-color="#7f8d91"/><stop offset="1" stop-color="#5d696c"/></linearGradient></defs><path d="M1 2 Q1 1 2 1 H7 Q8 1 8 2 V3 H13 Q14 3 14 4 V11 Q14 12 13 12 H2 Q1 12 1 11 Z" fill="#141414"/><rect x="1.8" y="1.8" width="5.4" height="2.6" fill="#c4c4c4"/><rect x="7.2" y="3.6" width="6.1" height="1" fill="#d6d6d6"/><rect x="1.8" y="4.4" width="11.5" height="0.7" fill="#3c4446"/><rect x="1.8" y="5.1" width="11.5" height="0.9" fill="#a8b8bc"/><rect x="1.8" y="6" width="11.5" height="5.3" fill="url(#fg)"/></svg>
<div class="t" style="left:76px;top:165px;font-size:11px;line-height:11px;color:#b4b4b4;letter-spacing:0.75px;">NewARScripts</div>
<svg class="a" style="left:58px;top:179px;" width="15" height="13" viewBox="0 0 15 13"><defs><linearGradient id="fg" x1="0" y1="0" x2="0" y2="1"><stop offset="0" stop-color="#7f8d91"/><stop offset="1" stop-color="#5d696c"/></linearGradient></defs><path d="M1 2 Q1 1 2 1 H7 Q8 1 8 2 V3 H13 Q14 3 14 4 V11 Q14 12 13 12 H2 Q1 12 1 11 Z" fill="#141414"/><rect x="1.8" y="1.8" width="5.4" height="2.6" fill="#c4c4c4"/><rect x="7.2" y="3.6" width="6.1" height="1" fill="#d6d6d6"/><rect x="1.8" y="4.4" width="11.5" height="0.7" fill="#3c4446"/><rect x="1.8" y="5.1" width="11.5" height="0.9" fill="#a8b8bc"/><rect x="1.8" y="6" width="11.5" height="5.3" fill="url(#fg)"/></svg>
<div class="t" style="left:76px;top:181px;font-size:11px;line-height:11px;color:#b4b4b4;letter-spacing:0.75px;">PlayAudio</div>
<svg class="a" style="left:47px;top:197px;" width="8" height="9" viewBox="0 0 8 9"><path d="M0.5 0 L7.5 4.5 L0.5 9 Z" fill="#747474"/></svg>
<svg class="a" style="left:58px;top:195px;" width="15" height="13" viewBox="0 0 15 13"><defs><linearGradient id="fg" x1="0" y1="0" x2="0" y2="1"><stop offset="0" stop-color="#7f8d91"/><stop offset="1" stop-color="#5d696c"/></linearGradient></defs><path d="M1 2 Q1 1 2 1 H7 Q8 1 8 2 V3 H13 Q14 3 14 4 V11 Q14 12 13 12 H2 Q1 12 1 11 Z" fill="#141414"/><rect x="1.8" y="1.8" width="5.4" height="2.6" fill="#c4c4c4"/><rect x="7.2" y="3.6" width="6.1" height="1" fill="#d6d6d6"/><rect x="1.8" y="4.4" width="11.5" height="0.7" fill="#3c4446"/><rect x="1.8" y="5.1" width="11.5" height="0.9" fill="#a8b8bc"/><rect x="1.8" y="6" width="11.5" height="5.3" fill="url(#fg)"/></svg>
<div class="t" style="left:76px;top:197px;font-size:11px;line-height:11px;color:#b4b4b4;letter-spacing:0.75px;">ProjectTaskDesign</div>
<svg class="a" style="left:58px;top:211px;" width="15" height="13" viewBox="0 0 15 13"><defs><linearGradient id="fg" x1="0" y1="0" x2="0" y2="1"><stop offset="0" stop-color="#7f8d91"/><stop offset="1" stop-color="#5d696c"/></linearGradient></defs><path d="M1 2 Q1 1 2 1 H7 Q8 1 8 2 V3 H13 Q14 3 14 4 V11 Q14 12 13 12 H2 Q1 12 1 11 Z" fill="#141414"/><rect x="1.8" y="1.8" width="5.4" height="2.6" fill="#c4c4c4"/><rect x="7.2" y="3.6" width="6.1" height="1" fill="#d6d6d6"/><rect x="1.8" y="4.4" width="11.5" height="0.7" fill="#3c4446"/><rect x="1.8" y="5.1" width="11.5" height="0.9" fill="#a8b8bc"/><rect x="1.8" y="6" width="11.5" height="5.3" fill="url(#fg)"/></svg>
<div class="t" style="left:76px;top:213px;font-size:11px;line-height:11px;color:#b4b4b4;letter-spacing:0.75px;">Scanner</div>
<svg class="a" style="left:58px;top:227px;" width="15" height="13" viewBox="0 0 15 13"><defs><linearGradient id="fg" x1="0" y1="0" x2="0" y2="1"><stop offset="0" stop-color="#7f8d91"/><stop offset="1" stop-color="#5d696c"/></linearGradient></defs><path d="M1 2 Q1 1 2 1 H7 Q8 1 8 2 V3 H13 Q14 3 14 4 V11 Q14 12 13 12 H2 Q1 12 1 11 Z" fill="#141414"/><rect x="1.8" y="1.8" width="5.4" height="2.6" fill="#c4c4c4"/><rect x="7.2" y="3.6" width="6.1" height="1" fill="#d6d6d6"/><rect x="1.8" y="4.4" width="11.5" height="0.7" fill="#3c4446"/><rect x="1.8" y="5.1" width="11.5" height="0.9" fill="#a8b8bc"/><rect x="1.8" y="6" width="11.5" height="5.3" fill="url(#fg)"/></svg>
<div class="t" style="left:76px;top:229px;font-size:11px;line-height:11px;color:#b4b4b4;letter-spacing:0.75px;">Server</div>
<svg class="a" style="left:58px;top:243px;" width="15" height="13" viewBox="0 0 15 13"><defs><linearGradient id="fg" x1="0" y1="0" x2="0" y2="1"><stop offset="0" stop-color="#7f8d91"/><stop offset="1" stop-color="#5d696c"/></linearGradient></defs><path d="M1 2 Q1 1 2 1 H7 Q8 1 8 2 V3 H13 Q14 3 14 4 V11 Q14 12 13 12 H2 Q1 12 1 11 Z" fill="#141414"/><rect x="1.8" y="1.8" width="5.4" height="2.6" fill="#c4c4c4"/><rect x="7.2" y="3.6" width="6.1" height="1" fill="#d6d6d6"/><rect x="1.8" y="4.4" width="11.5" height="0.7" fill="#3c4446"/><rect x="1.8" y="5.1" width="11.5" height="0.9" fill="#a8b8bc"/><rect x="1.8" y="6" width="11.5" height="5.3" fill="url(#fg)"/></svg>
<div class="t" style="left:76px;top:245px;font-size:11px;line-height:11px;color:#b4b4b4;letter-spacing:0.75px;">SpeechRecognition</div>
</div>
<div class="a" style="left:1340px;top:106px;width:15px;height:248px;background:linear-gradient(90deg,#2c2c2c,#333 50%,#2c2c2c)"></div>
<div class="a" style="left:1342px;top:123px;width:11px;height:214px;background:#2e2e2e;border-radius:6px;box-shadow:inset 0 0 2px #222"></div>
<div class="a" style="left:1342px;top:181px;width:11px;height:61px;background:linear-gradient(90deg,#4a4a4a,#555 50%,#4a4a4a);border-radius:6px"></div>
<svg class="a" style="left:1344px;top:111px;" width="8" height="6" viewBox="0 0 8 6"><path d="M0 5.5 L4 0.5 L8 5.5 Z" fill="#111"/></svg>
<svg class="a" style="left:1344px;top:344px;" width="8" height="6" viewBox="0 0 8 6"><path d="M0 0.5 L4 5.5 L8 0.5 Z" fill="#111"/></svg>
<div class="a" style="left:1354px;top:106px;width:1px;height:248px;background:#252525"></div>
<div class="a" style="left:1355px;top:107px;width:219px;height:17px;background:#3e3e3e"></div>
<div class="a" style="left:1355px;top:124px;width:219px;height:1px;background:#2a2a2a"></div>
<div class="t" style="left:1361px;top:111px;font-size:11px;line-height:11px;color:#b4b4b4;letter-spacing:0.75px;">Assets</div>
<svg class="a" style="left:1405px;top:113px;" width="5" height="7" viewBox="0 0 5 7"><path d="M0 0 L5 3.5 L0 7 Z" fill="#8a8a8a"/></svg>
<div class="t" style="left:1416px;top:111px;font-size:11px;line-height:11px;color:#b4b4b4;letter-spacing:0.75px;">Test</div>
<svg class="a" style="left:1447px;top:113px;" width="5" height="7" viewBox="0 0 5 7"><path d="M0 0 L5 3.5 L0 7 Z" fill="#8a8a8a"/></svg>
<div class="t" style="left:1458px;top:111px;font-size:11px;line-height:11px;color:#b4b4b4;letter-spacing:0.75px;">Sprite</div>
<svg class="a" style="left:1498px;top:113px;" width="5" height="7" viewBox="0 0 5 7"><path d="M0 0 L5 3.5 L0 7 Z" fill="#8a8a8a"/></svg>
<div class="t" style="left:1510px;top:111px;font-size:11px;line-height:11px;color:#d0d0d0;letter-spacing:1.0px;font-weight:bold;">Load</div>
<svg class="a" style="left:1373px;top:127px;" width="12" height="14" viewBox="0 0 12 14"><path d="M0.5 0.5 H8.5 L11.5 3.5 V13.5 H0.5 Z" fill="#f2f4f6" stroke="#2a2a2a" stroke-width="0.8"/><path d="M7 4.5 A3.2 3.2 0 1 0 7 10" fill="none" stroke="#1a8ad0" stroke-width="1.7"/><path d="M6.5 5.5 V10 M8.5 5.5 V10 M5.5 6.7 H9.8 M5.5 8.7 H9.8" stroke="#1a8ad0" stroke-width="0.8"/></svg>
<div class="t" style="left:1389px;top:129px;font-size:11px;line-height:11px;color:#b4b4b4;letter-spacing:0.8px;">DontDestroyOnLoad</div>
<svg class="a" style="left:1373px;top:143px;" width="12" height="14" viewBox="0 0 12 14"><path d="M0.5 0.5 H8.5 L11.5 3.5 V13.5 H0.5 Z" fill="#f2f4f6" stroke="#2a2a2a" stroke-width="0.8"/><path d="M7 4.5 A3.2 3.2 0 1 0 7 10" fill="none" stroke="#1a8ad0" stroke-width="1.7"/><path d="M6.5 5.5 V10 M8.5 5.5 V10 M5.5 6.7 H9.8 M5.5 8.7 H9.8" stroke="#1a8ad0" stroke-width="0.8"/></svg>
<div class="t" style="left:1389px;top:145px;font-size:11px;line-height:11px;color:#b4b4b4;letter-spacing:0.8px;">LoadingScene</div>
<div class="a" style="left:1355px;top:338px;width:219px;height:16px;background:#3c3c3c;border-top:1px solid #2a2a2a"></div>
<div class="a" style="left:1509px;top:345px;width:50px;height:4px;background:#2a2a2a;border-radius:2px"></div>
<svg class="a" style="left:1501px;top:342px;" width="11" height="11" viewBox="0 0 11 11"><circle cx="5.5" cy="5.5" r="4.8" fill="#565656" stroke="#2a2a2a"/></svg>
<div class="a" style="left:1159px;top:354px;width:415px;height:4px;background:#282828"></div>
<div class="a" style="left:1159px;top:354px;width:415px;height:1px;background:#1e1e1e"></div>
<div class="tab" style="left:1159px;top:358px;width:98px"></div>
<svg class="a" style="left:1168px;top:361px;" width="10" height="12" viewBox="0 0 10 12"><rect x="0.5" y="0.5" width="9" height="11" rx="1" fill="#d8d8d8" stroke="#111"/><path d="M2.5 3 H7.5 M2.5 5 H6.5 M2.5 7 H7.5 M2.5 9 H6" stroke="#444" stroke-width="1"/></svg>
<div class="t" style="left:1182px;top:362px;font-size:11px;line-height:11px;color:#c8c8c8;letter-spacing:0.75px;">Console</div>
<svg class="a" style="left:1557px;top:367px;" width="15" height="8" viewBox="0 0 15 8"><path d="M0 1 H5 L2.5 4 Z" fill="#c4c4c4"/><rect x="5.5" y="1" width="9" height="1.3" fill="#c4c4c4"/><rect x="5.5" y="3.6" width="9" height="1.3" fill="#c4c4c4"/><rect x="5.5" y="6.2" width="9" height="1.3" fill="#c4c4c4"/></svg>
<div class="ptb" style="left:1159px;top:375px;width:415px"></div>
<div class="a" style="left:1164px;top:375px;width:1px;height:17px;background:#1f1f1f"></div>
<div class="t" style="left:1170px;top:379px;font-size:10px;line-height:10px;color:#c0c0c0;letter-spacing:0.6px;">Clear</div>
<div class="a" style="left:1201px;top:375px;width:1px;height:17px;background:#1f1f1f"></div>
<div class="a" style="left:1207px;top:375px;width:131px;height:16px;background:linear-gradient(#4c4c4c,#434343)"></div>
<div class="a" style="left:1261px;top:375px;width:1px;height:17px;background:#2a2a2a"></div>
<div class="a" style="left:1338px;top:375px;width:1px;height:17px;background:#1f1f1f"></div>
<div class="t" style="left:1213px;top:379px;font-size:10px;line-height:10px;color:#c0c0c0;letter-spacing:0.55px;">Collapse</div>
<div class="t" style="left:1267px;top:379px;font-size:10px;line-height:10px;color:#c0c0c0;letter-spacing:0.5px;">Clear on Play</div>
<div class="t" style="left:1344px;top:379px;font-size:10px;line-height:10px;color:#c0c0c0;letter-spacing:0.5px;">Error Pause</div>
<div class="a" style="left:1407px;top:375px;width:1px;height:17px;background:#1f1f1f"></div>
<div class="a" style="left:1408px;top:375px;width:90px;height:17px;overflow:hidden">
<div class="t" style="left:6px;top:4px;font-size:10px;line-height:10px;color:#c0c0c0;letter-spacing:0.55px;">Connected Player</div>
</div>
<svg class="a" style="left:1500px;top:381px;" width="7" height="4" viewBox="0 0 7 4"><path d="M0 0 H6 L3 3.5 Z" fill="#aaa"/></svg>
<div class="a" style="left:1511px;top:375px;width:1px;height:17px;background:#1f1f1f"></div>
<div class="a" style="left:1514px;top:375px;width:32px;height:16px;background:linear-gradient(#4c4c4c,#434343)"></div>
<svg class="a" style="left:1519px;top:377px;" width="13" height="13" viewBox="0 0 13 13"><path d="M6.5 0.5 a6 5.5 0 1 1 -2.5 10.5 L3 12.5 L3.3 10.3 a6 5.5 0 0 1 3.2 -9.8 Z" fill="#f0f0f0" stroke="#222" stroke-width="0.8"/><rect x="5.7" y="2.8" width="1.8" height="5" fill="#222"/><rect x="5.7" y="8.5" width="1.8" height="1.6" fill="#222"/></svg>
<div class="t" style="left:1535px;top:379px;font-size:10px;line-height:10px;color:#c0c0c0;letter-spacing:0px;">0</div>
<svg class="a" style="left:1552px;top:377px;" width="13" height="12" viewBox="0 0 13 12"><path d="M6.5 0.5 L12.5 11.5 H0.5 Z" fill="#e8e8e8" stroke="#222" stroke-width="0.8"/><rect x="5.8" y="4" width="1.5" height="4.5" fill="#222"/></svg>
<div class="t" style="left:1568px;top:379px;font-size:10px;line-height:10px;color:#c0c0c0;letter-spacing:0px;">0</div>
<div class="a" style="left:1159px;top:392px;width:415px;height:622px;background:#383838"></div>
<div class="a" style="left:1159px;top:1014px;width:415px;height:1px;background:#1e1e1e"></div>
<div class="a" style="left:1159px;top:829px;width:415px;height:1px;background:#242424"></div>
<div class="a" style="left:1574px;top:89px;width:4px;height:926px;background:#2a2a2a"></div>
<div class="a" style="left:1574px;top:89px;width:1px;height:926px;background:#202020"></div>
<div class="a" style="left:1577px;top:89px;width:1px;height:926px;background:#202020"></div>
<div class="tab" style="left:1578px;top:72px;width:98px"></div>
<svg class="a" style="left:1586px;top:75px;" width="12" height="12" viewBox="0 0 12 12"><circle cx="6" cy="6" r="5.5" fill="#e8e8e8"/><rect x="5" y="5" width="2.2" height="4.5" fill="#111"/><rect x="5" y="2.5" width="2.2" height="1.8" fill="#111"/><rect x="4" y="8.5" width="4" height="1" fill="#111"/></svg>
<div class="t" style="left:1601px;top:76px;font-size:11px;line-height:11px;color:#c8c8c8;letter-spacing:0.75px;">Inspector</div>
<svg class="a" style="left:1891px;top:78px;" width="9" height="10" viewBox="0 0 9 10"><path d="M1.8 4.5 V3 a2.7 2.7 0 0 1 5.4 0 V4.5" fill="none" stroke="#8a8a8a" stroke-width="1.3"/><rect x="0.5" y="4.5" width="8" height="5.5" fill="#8a8a8a"/></svg>
<svg class="a" style="left:1903px;top:81px;" width="15" height="8" viewBox="0 0 15 8"><path d="M0 1 H5 L2.5 4 Z" fill="#c4c4c4"/><rect x="5.5" y="1" width="9" height="1.3" fill="#c4c4c4"/><rect x="5.5" y="3.6" width="9" height="1.3" fill="#c4c4c4"/><rect x="5.5" y="6.2" width="9" height="1.3" fill="#c4c4c4"/></svg>
<div class="a" style="left:1578px;top:89px;width:340px;height:925px;background:#383838"></div>
<div class="a" style="left:1578px;top:1014px;width:340px;height:1px;background:#1e1e1e"></div>
<div class="a" style="left:1578px;top:89px;width:340px;height:48px;background:#3e3e3e"></div>
<div class="a" style="left:1578px;top:137px;width:340px;height:1px;background:#4b4b4b"></div>
<svg class="a" style="left:1584px;top:96px;" width="22" height="22" viewBox="0 0 22 22"><path d="M1 5 L10.5 1 L20.5 4.5 L11 8.5 Z" fill="#8cc43c"/><path d="M1 5 L11 8.5 L11 20 L1.5 16 Z" fill="#4aa8e0"/><path d="M11 8.5 L20.5 4.5 L20 15.5 L11 20 Z" fill="#e05a10"/><path d="M2 16 H12 L7 21 Z" fill="#d8d8d8"/></svg>
<div class="a" style="left:1621px;top:98px;width:13px;height:13px;border:1px solid #1e1e1e;border-radius:2px;background:linear-gradient(#4a4a4a,#383838);box-shadow:inset 0 1px 0 #555"></div>
<svg class="a" style="left:1622px;top:98px;" width="12" height="12" viewBox="0 0 12 12"><path d="M1.8 6.2 L4.6 9.4 L10.5 1.8" fill="none" stroke="#f4f4f4" stroke-width="1.9"/></svg>
<div class="fld" style="left:1639px;top:96px;width:207px;height:16px;background:#393939;border-color:#262626;border-top-color:#1e1e1e"></div>
<div class="t" style="left:1643px;top:99px;font-size:11px;line-height:11px;color:#c8c8c8;letter-spacing:0.8px;">Main Camera</div>
<div class="a" style="left:1851px;top:98px;width:13px;height:13px;border:1px solid #1e1e1e;border-radius:2px;background:linear-gradient(#4a4a4a,#383838)"></div>
<div class="t" style="left:1868px;top:99px;font-size:11px;line-height:11px;color:#b4b4b4;letter-spacing:0.7px;">Static</div>
<svg class="a" style="left:1904px;top:101px;" width="10" height="7" viewBox="0 0 10 7"><path d="M0 0 H10 L5 6.5 Z" fill="#d0d0d0"/></svg>
<div class="t" style="left:1613px;top:119px;font-size:11px;line-height:11px;color:#b4b4b4;letter-spacing:0.7px;">Tag</div>
<div class="pop" style="left:1640px;top:117px;width:120px;height:14px"></div>
<div class="t" style="left:1646px;top:120px;font-size:10px;line-height:10px;color:#c0c0c0;letter-spacing:0.52px;">MainCamera</div>
<svg class="a" style="left:1751px;top:120px;" width="5" height="9" viewBox="0 0 5 9"><path d="M0 3.5 L2.5 0 L5 3.5 Z M0 5.5 L2.5 9 L5 5.5 Z" fill="#a8a8a8"/></svg>
<div class="t" style="left:1767px;top:119px;font-size:11px;line-height:11px;color:#b4b4b4;letter-spacing:0.7px;">Layer</div>
<div class="pop" style="left:1807px;top:117px;width:107px;height:14px"></div>
<div class="t" style="left:1813px;top:120px;font-size:10px;line-height:10px;color:#c0c0c0;letter-spacing:0.52px;">Default</div>
<svg class="a" style="left:1905px;top:120px;" width="5" height="9" viewBox="0 0 5 9"><path d="M0 3.5 L2.5 0 L5 3.5 Z M0 5.5 L2.5 9 L5 5.5 Z" fill="#a8a8a8"/></svg>
<svg class="a" style="left:1582px;top:144px;" width="9" height="8" viewBox="0 0 9 8"><path d="M0 0.5 H9 L4.5 7.5 Z" fill="#747474"/></svg>
<svg class="a" style="left:1594px;top:141px;" width="14" height="13" viewBox="0 0 14 13"><path d="M6.5 0.5 V7.5" stroke="#8cd040" stroke-width="1.6"/><path d="M6.5 7.5 L13 11.5" stroke="#e02828" stroke-width="1.8"/><path d="M6.5 7.5 L0.8 11.5" stroke="#2a9ae0" stroke-width="1.8"/></svg>
<div class="t" style="left:1628px;top:143px;font-size:11px;line-height:11px;color:#c8c8c8;letter-spacing:1.42px;font-weight:bold;">Transform</div>
<svg class="a" style="left:1887px;top:140px;" width="14" height="14" viewBox="0 0 14 14"><path d="M1 2 L3 0.5 H12.5 V11.5 L10.5 13.5 H1 Z" fill="#2c4070"/><rect x="1" y="2" width="9.5" height="11.5" fill="#4d6fa8"/><path d="M10.5 2 L12.5 0.5 V11.5 L10.5 13.5 Z" fill="#6a8cc0"/><text x="5.8" y="10.5" font-size="8.5" font-family="Liberation Sans" fill="#e6eeff" text-anchor="middle">?</text></svg>
<svg class="a" style="left:1904px;top:141px;" width="14" height="14" viewBox="0 0 14 14"><g transform="translate(5.6 5.6)" fill="#c4c4c4"><circle r="3.3"/><rect x="-0.95" y="-4.9" width="1.9" height="2.6" transform="rotate(0)"/><rect x="-0.95" y="-4.9" width="1.9" height="2.6" transform="rotate(45)"/><rect x="-0.95" y="-4.9" width="1.9" height="2.6" transform="rotate(90)"/><rect x="-0.95" y="-4.9" width="1.9" height="2.6" transform="rotate(135)"/><rect x="-0.95" y="-4.9" width="1.9" height="2.6" transform="rotate(180)"/><rect x="-0.95" y="-4.9" width="1.9" height="2.6" transform="rotate(225)"/><rect x="-0.95" y="-4.9" width="1.9" height="2.6" transform="rotate(270)"/><rect x="-0.95" y="-4.9" width="1.9" height="2.6" transform="rotate(315)"/></g><circle cx="5.6" cy="5.6" r="1.5" fill="#3c3c3c"/><path d="M11 10.5 H14 L12.5 12.5 Z" fill="#c4c4c4"/></svg>
<div class="t" style="left:1593px;top:159px;font-size:11px;line-height:11px;color:#b4b4b4;letter-spacing:0.75px;">Position</div>
<div class="t" style="left:1712px;top:159px;font-size:11px;line-height:11px;color:#b4b4b4;letter-spacing:0px;">X</div>
<div class="fld" style="left:1723px;top:156px;width:54px;height:15px;background:#3c3c3c;border-color:#2a2a2a;border-top-color:#222"></div>
<div class="t" style="left:1727px;top:159px;font-size:11px;line-height:11px;color:#c0c0c0;letter-spacing:0.6px;">0</div>
<div class="t" style="left:1781px;top:159px;font-size:11px;line-height:11px;color:#b4b4b4;letter-spacing:0px;">Y</div>
<div class="fld" style="left:1792px;top:156px;width:55px;height:15px;background:#3c3c3c;border-color:#2a2a2a;border-top-color:#222"></div>
<div class="t" style="left:1796px;top:159px;font-size:11px;line-height:11px;color:#c0c0c0;letter-spacing:0.6px;">1</div>
<div class="t" style="left:1851px;top:159px;font-size:11px;line-height:11px;color:#b4b4b4;letter-spacing:0px;">Z</div>
<div class="fld" style="left:1862px;top:156px;width:54px;height:15px;background:#3c3c3c;border-color:#2a2a2a;border-top-color:#222"></div>
<div class="t" style="left:1866px;top:159px;font-size:11px;line-height:11px;color:#c0c0c0;letter-spacing:0.6px;">-10</div>
<div class="t" style="left:1593px;top:177px;font-size:11px;line-height:11px;color:#b4b4b4;letter-spacing:0.75px;">Rotation</div>
<div class="t" style="left:1712px;top:177px;font-size:11px;line-height:11px;color:#b4b4b4;letter-spacing:0px;">X</div>
<div class="fld" style="left:1723px;top:174px;width:54px;height:15px;background:#3c3c3c;border-color:#2a2a2a;border-top-color:#222"></div>
<div class="t" style="left:1727px;top:177px;font-size:11px;line-height:11px;color:#c0c0c0;letter-spacing:0.6px;">0</div>
<div class="t" style="left:1781px;top:177px;font-size:11px;line-height:11px;color:#b4b4b4;letter-spacing:0px;">Y</div>
<div class="fld" style="left:1792px;top:174px;width:55px;height:15px;background:#3c3c3c;border-color:#2a2a2a;border-top-color:#222"></div>
<div class="t" style="left:1796px;top:177px;font-size:11px;line-height:11px;color:#c0c0c0;letter-spacing:0.6px;">0</div>
<div class="t" style="left:1851px;top:177px;font-size:11px;line-height:11px;color:#b4b4b4;letter-spacing:0px;">Z</div>
<div class="fld" style="left:1862px;top:174px;width:54px;height:15px;background:#3c3c3c;border-color:#2a2a2a;border-top-color:#222"></div>
<div class="t" style="left:1866px;top:177px;font-size:11px;line-height:11px;color:#c0c0c0;letter-spacing:0.6px;">0</div>
<div class="t" style="left:1593px;top:195px;font-size:11px;line-height:11px;color:#b4b4b4;letter-spacing:0.75px;">Scale</div>
<div class="t" style="left:1712px;top:195px;font-size:11px;line-height:11px;color:#b4b4b4;letter-spacing:0px;">X</div>
<div class="fld" style="left:1723px;top:192px;width:54px;height:15px;background:#3c3c3c;border-color:#2a2a2a;border-top-color:#222"></div>
<div class="t" style="left:1727px;top:195px;font-size:11px;line-height:11px;color:#c0c0c0;letter-spacing:0.6px;">1</div>
<div class="t" style="left:1781px;top:195px;font-size:11px;line-height:11px;color:#b4b4b4;letter-spacing:0px;">Y</div>
<div class="fld" style="left:1792px;top:192px;width:55px;height:15px;background:#3c3c3c;border-color:#2a2a2a;border-top-color:#222"></div>
<div class="t" style="left:1796px;top:195px;font-size:11px;line-height:11px;color:#c0c0c0;letter-spacing:0.6px;">1</div>
<div class="t" style="left:1851px;top:195px;font-size:11px;line-height:11px;color:#b4b4b4;letter-spacing:0px;">Z</div>
<div class="fld" style="left:1862px;top:192px;width:54px;height:15px;background:#3c3c3c;border-color:#2a2a2a;border-top-color:#222"></div>
<div class="t" style="left:1866px;top:195px;font-size:11px;line-height:11px;color:#c0c0c0;letter-spacing:0.6px;">1</div>
<div class="a" style="left:1578px;top:212px;width:340px;height:1px;background:#4b4b4b"></div>
<svg class="a" style="left:1582px;top:219px;" width="9" height="8" viewBox="0 0 9 8"><path d="M0 0.5 H9 L4.5 7.5 Z" fill="#747474"/></svg>
<svg class="a" style="left:1594px;top:217px;" width="15" height="12" viewBox="0 0 15 12"><circle cx="5" cy="3.2" r="2.3" fill="#6f8696"/><circle cx="8.8" cy="3.6" r="1.9" fill="#6f8696"/><rect x="1.5" y="5.5" width="9" height="5.5" rx="1" fill="#6f8696"/><rect x="0" y="7" width="2" height="2.5" fill="#6f8696"/><path d="M10.5 7.5 L13.5 6 V10.5 L10.5 9 Z" fill="#6f8696"/></svg>
<div class="a" style="left:1612px;top:216px;width:13px;height:13px;border:1px solid #1e1e1e;border-radius:2px;background:linear-gradient(#4a4a4a,#383838);box-shadow:inset 0 1px 0 #555"></div>
<svg class="a" style="left:1613px;top:216px;" width="12" height="12" viewBox="0 0 12 12"><path d="M1.8 6.2 L4.6 9.4 L10.5 1.8" fill="none" stroke="#f4f4f4" stroke-width="1.9"/></svg>
<div class="t" style="left:1628px;top:218px;font-size:11px;line-height:11px;color:#c8c8c8;letter-spacing:1.42px;font-weight:bold;">Camera</div>
<svg class="a" style="left:1887px;top:215px;" width="14" height="14" viewBox="0 0 14 14"><path d="M1 2 L3 0.5 H12.5 V11.5 L10.5 13.5 H1 Z" fill="#2c4070"/><rect x="1" y="2" width="9.5" height="11.5" fill="#4d6fa8"/><path d="M10.5 2 L12.5 0.5 V11.5 L10.5 13.5 Z" fill="#6a8cc0"/><text x="5.8" y="10.5" font-size="8.5" font-family="Liberation Sans" fill="#e6eeff" text-anchor="middle">?</text></svg>
<svg class="a" style="left:1904px;top:216px;" width="14" height="14" viewBox="0 0 14 14"><g transform="translate(5.6 5.6)" fill="#c4c4c4"><circle r="3.3"/><rect x="-0.95" y="-4.9" width="1.9" height="2.6" transform="rotate(0)"/><rect x="-0.95" y="-4.9" width="1.9" height="2.6" transform="rotate(45)"/><rect x="-0.95" y="-4.9" width="1.9" height="2.6" transform="rotate(90)"/><rect x="-0.95" y="-4.9" width="1.9" height="2.6" transform="rotate(135)"/><rect x="-0.95" y="-4.9" width="1.9" height="2.6" transform="rotate(180)"/><rect x="-0.95" y="-4.9" width="1.9" height="2.6" transform="rotate(225)"/><rect x="-0.95" y="-4.9" width="1.9" height="2.6" transform="rotate(270)"/><rect x="-0.95" y="-4.9" width="1.9" height="2.6" transform="rotate(315)"/></g><circle cx="5.6" cy="5.6" r="1.5" fill="#3c3c3c"/><path d="M11 10.5 H14 L12.5 12.5 Z" fill="#c4c4c4"/></svg>
<div class="t" style="left:1593px;top:234px;font-size:11px;line-height:11px;color:#b4b4b4;letter-spacing:0.62px;">Clear Flags</div>
<div class="pop" style="left:1712px;top:232px;width:203px;height:14px"></div>
<div class="t" style="left:1718px;top:235px;font-size:10px;line-height:10px;color:#c0c0c0;letter-spacing:0.52px;">Depth only</div>
<svg class="a" style="left:1906px;top:235px;" width="5" height="9" viewBox="0 0 5 9"><path d="M0 3.5 L2.5 0 L5 3.5 Z M0 5.5 L2.5 9 L5 5.5 Z" fill="#a8a8a8"/></svg>
<div class="t" style="left:1593px;top:252px;font-size:11px;line-height:11px;color:#b4b4b4;letter-spacing:0.62px;">Culling Mask</div>
<div class="pop" style="left:1712px;top:250px;width:203px;height:14px"></div>
<div class="t" style="left:1718px;top:253px;font-size:10px;line-height:10px;color:#c0c0c0;letter-spacing:0.52px;">Nothing</div>
<svg class="a" style="left:1906px;top:253px;" width="5" height="9" viewBox="0 0 5 9"><path d="M0 3.5 L2.5 0 L5 3.5 Z M0 5.5 L2.5 9 L5 5.5 Z" fill="#a8a8a8"/></svg>
<div class="t" style="left:1593px;top:278px;font-size:11px;line-height:11px;color:#b4b4b4;letter-spacing:0.62px;">Projection</div>
<div class="pop" style="left:1712px;top:276px;width:203px;height:14px"></div>
<div class="t" style="left:1718px;top:279px;font-size:10px;line-height:10px;color:#c0c0c0;letter-spacing:0.52px;">Orthographic</div>
<svg class="a" style="left:1906px;top:279px;" width="5" height="9" viewBox="0 0 5 9"><path d="M0 3.5 L2.5 0 L5 3.5 Z M0 5.5 L2.5 9 L5 5.5 Z" fill="#a8a8a8"/></svg>
<div class="t" style="left:1593px;top:296px;font-size:11px;line-height:11px;color:#b4b4b4;letter-spacing:0.62px;">Size</div>
<div class="fld" style="left:1711px;top:293px;width:204px;height:15px;background:#3c3c3c;border-color:#2a2a2a;border-top-color:#222"></div>
<div class="t" style="left:1715px;top:296px;font-size:11px;line-height:11px;color:#c0c0c0;letter-spacing:0.6px;">5</div>
<div class="t" style="left:1593px;top:314px;font-size:11px;line-height:11px;color:#b4b4b4;letter-spacing:0.64px;">Clipping Planes</div>
<div class="t" style="left:1713px;top:314px;font-size:11px;line-height:11px;color:#b4b4b4;letter-spacing:0.6px;">Near</div>
<div class="fld" style="left:1746px;top:311px;width:169px;height:15px;background:#3c3c3c;border-color:#2a2a2a;border-top-color:#222"></div>
<div class="t" style="left:1750px;top:314px;font-size:11px;line-height:11px;color:#c0c0c0;letter-spacing:0.6px;">0.3</div>
<div class="t" style="left:1713px;top:330px;font-size:11px;line-height:11px;color:#b4b4b4;letter-spacing:0.6px;">Far</div>
<div class="fld" style="left:1746px;top:327px;width:169px;height:15px;background:#3c3c3c;border-color:#2a2a2a;border-top-color:#222"></div>
<div class="t" style="left:1750px;top:330px;font-size:11px;line-height:11px;color:#c0c0c0;letter-spacing:0.6px;">1000</div>
<div class="t" style="left:1593px;top:348px;font-size:11px;line-height:11px;color:#b4b4b4;letter-spacing:0.64px;">Viewport Rect</div>
<div class="t" style="left:1712px;top:348px;font-size:11px;line-height:11px;color:#b4b4b4;letter-spacing:0px;">X</div>
<div class="fld" style="left:1723px;top:345px;width:54px;height:15px;background:#3c3c3c;border-color:#2a2a2a;border-top-color:#222"></div>
<div class="t" style="left:1727px;top:348px;font-size:11px;line-height:11px;color:#c0c0c0;letter-spacing:0.6px;">0</div>
<div class="t" style="left:1781px;top:348px;font-size:11px;line-height:11px;color:#b4b4b4;letter-spacing:0px;">Y</div>
<div class="fld" style="left:1792px;top:345px;width:55px;height:15px;background:#3c3c3c;border-color:#2a2a2a;border-top-color:#222"></div>
<div class="t" style="left:1796px;top:348px;font-size:11px;line-height:11px;color:#c0c0c0;letter-spacing:0.6px;">0</div>
<div class="t" style="left:1712px;top:364px;font-size:11px;line-height:11px;color:#b4b4b4;letter-spacing:0px;">W</div>
<div class="fld" style="left:1723px;top:361px;width:54px;height:15px;background:#3c3c3c;border-color:#2a2a2a;border-top-color:#222"></div>
<div class="t" style="left:1727px;top:364px;font-size:11px;line-height:11px;color:#c0c0c0;letter-spacing:0.6px;">1</div>
<div class="t" style="left:1781px;top:364px;font-size:11px;line-height:11px;color:#b4b4b4;letter-spacing:0px;">H</div>
<div class="fld" style="left:1792px;top:361px;width:55px;height:15px;background:#3c3c3c;border-color:#2a2a2a;border-top-color:#222"></div>
<div class="t" style="left:1796px;top:364px;font-size:11px;line-height:11px;color:#c0c0c0;letter-spacing:0.6px;">1</div>
<div class="t" style="left:1593px;top:390px;font-size:11px;line-height:11px;color:#b4b4b4;letter-spacing:0.64px;">Depth</div>
<div class="fld" style="left:1711px;top:387px;width:204px;height:15px;background:#3c3c3c;border-color:#2a2a2a;border-top-color:#222"></div>
<div class="t" style="left:1715px;top:390px;font-size:11px;line-height:11px;color:#c0c0c0;letter-spacing:0.6px;">-1</div>
<div class="t" style="left:1593px;top:408px;font-size:11px;line-height:11px;color:#b4b4b4;letter-spacing:0.64px;">Rendering Path</div>
<div class="pop" style="left:1712px;top:406px;width:203px;height:13px"></div>
<div class="t" style="left:1718px;top:409px;font-size:10px;line-height:10px;color:#c0c0c0;letter-spacing:0.52px;">Use Graphics Settings</div>
<svg class="a" style="left:1906px;top:409px;" width="5" height="9" viewBox="0 0 5 9"><path d="M0 3.5 L2.5 0 L5 3.5 Z M0 5.5 L2.5 9 L5 5.5 Z" fill="#a8a8a8"/></svg>
<div class="t" style="left:1593px;top:426px;font-size:11px;line-height:11px;color:#b4b4b4;letter-spacing:0.64px;">Target Texture</div>
<div class="fld" style="left:1711px;top:423px;width:187px;height:15px;background:#3c3c3c;border-color:#2a2a2a;border-top-color:#222"></div>
<div class="t" style="left:1714px;top:426px;font-size:11px;line-height:11px;color:#c0c0c0;letter-spacing:0.9px;">None (Render Texture)</div>
<svg class="a" style="left:1905px;top:426px;" width="9" height="9" viewBox="0 0 9 9"><circle cx="4.5" cy="4.5" r="3.7" fill="none" stroke="#a8a8a8" stroke-width="1.1"/><circle cx="4.5" cy="4.5" r="1.3" fill="#a8a8a8"/></svg>
<div class="t" style="left:1593px;top:444px;font-size:11px;line-height:11px;color:#b4b4b4;letter-spacing:0.7px;">Occlusion Culling</div>
<div class="a" style="left:1712px;top:443px;width:13px;height:13px;border:1px solid #1e1e1e;border-radius:2px;background:linear-gradient(#4a4a4a,#383838);box-shadow:inset 0 1px 0 #555"></div>
<svg class="a" style="left:1713px;top:443px;" width="12" height="12" viewBox="0 0 12 12"><path d="M1.8 6.2 L4.6 9.4 L10.5 1.8" fill="none" stroke="#f4f4f4" stroke-width="1.9"/></svg>
<div class="t" style="left:1593px;top:462px;font-size:11px;line-height:11px;color:#b4b4b4;letter-spacing:0.7px;">Allow HDR</div>
<div class="a" style="left:1712px;top:461px;width:13px;height:13px;border:1px solid #1e1e1e;border-radius:2px;background:linear-gradient(#4a4a4a,#383838);box-shadow:inset 0 1px 0 #555"></div>
<svg class="a" style="left:1713px;top:461px;" width="12" height="12" viewBox="0 0 12 12"><path d="M1.8 6.2 L4.6 9.4 L10.5 1.8" fill="none" stroke="#f4f4f4" stroke-width="1.9"/></svg>
<div class="t" style="left:1593px;top:480px;font-size:11px;line-height:11px;color:#b4b4b4;letter-spacing:0.7px;">Allow MSAA</div>
<div class="a" style="left:1712px;top:479px;width:13px;height:13px;border:1px solid #1e1e1e;border-radius:2px;background:linear-gradient(#4a4a4a,#383838);box-shadow:inset 0 1px 0 #555"></div>
<svg class="a" style="left:1713px;top:479px;" width="12" height="12" viewBox="0 0 12 12"><path d="M1.8 6.2 L4.6 9.4 L10.5 1.8" fill="none" stroke="#f4f4f4" stroke-width="1.9"/></svg>
<div class="t" style="left:1593px;top:506px;font-size:11px;line-height:11px;color:#b4b4b4;letter-spacing:0.7px;">Target Display</div>
<div class="pop" style="left:1712px;top:504px;width:203px;height:14px"></div>
<div class="t" style="left:1718px;top:507px;font-size:10px;line-height:10px;color:#c0c0c0;letter-spacing:0.52px;">Display 1</div>
<svg class="a" style="left:1906px;top:507px;" width="5" height="9" viewBox="0 0 5 9"><path d="M0 3.5 L2.5 0 L5 3.5 Z M0 5.5 L2.5 9 L5 5.5 Z" fill="#a8a8a8"/></svg>
<div class="a" style="left:1578px;top:523px;width:340px;height:1px;background:#4b4b4b"></div>
<svg class="a" style="left:1594px;top:527px;" width="14" height="14" viewBox="0 0 14 14"><rect x="0.5" y="4" width="10" height="9.5" fill="#5f7888"/><circle cx="11" cy="3" r="2.6" fill="#f0a030"/><circle cx="11" cy="3" r="1.2" fill="#fff"/></svg>
<div class="a" style="left:1612px;top:527px;width:13px;height:13px;border:1px solid #1e1e1e;border-radius:2px;background:linear-gradient(#4a4a4a,#383838);box-shadow:inset 0 1px 0 #555"></div>
<svg class="a" style="left:1613px;top:527px;" width="12" height="12" viewBox="0 0 12 12"><path d="M1.8 6.2 L4.6 9.4 L10.5 1.8" fill="none" stroke="#f4f4f4" stroke-width="1.9"/></svg>
<div class="t" style="left:1628px;top:529px;font-size:11px;line-height:11px;color:#c8c8c8;letter-spacing:1.44px;font-weight:bold;">Flare Layer</div>
<svg class="a" style="left:1887px;top:527px;" width="14" height="14" viewBox="0 0 14 14"><path d="M1 2 L3 0.5 H12.5 V11.5 L10.5 13.5 H1 Z" fill="#2c4070"/><rect x="1" y="2" width="9.5" height="11.5" fill="#4d6fa8"/><path d="M10.5 2 L12.5 0.5 V11.5 L10.5 13.5 Z" fill="#6a8cc0"/><text x="5.8" y="10.5" font-size="8.5" font-family="Liberation Sans" fill="#e6eeff" text-anchor="middle">?</text></svg>
<svg class="a" style="left:1904px;top:528px;" width="14" height="14" viewBox="0 0 14 14"><g transform="translate(5.6 5.6)" fill="#c4c4c4"><circle r="3.3"/><rect x="-0.95" y="-4.9" width="1.9" height="2.6" transform="rotate(0)"/><rect x="-0.95" y="-4.9" width="1.9" height="2.6" transform="rotate(45)"/><rect x="-0.95" y="-4.9" width="1.9" height="2.6" transform="rotate(90)"/><rect x="-0.95" y="-4.9" width="1.9" height="2.6" transform="rotate(135)"/><rect x="-0.95" y="-4.9" width="1.9" height="2.6" transform="rotate(180)"/><rect x="-0.95" y="-4.9" width="1.9" height="2.6" transform="rotate(225)"/><rect x="-0.95" y="-4.9" width="1.9" height="2.6" transform="rotate(270)"/><rect x="-0.95" y="-4.9" width="1.9" height="2.6" transform="rotate(315)"/></g><circle cx="5.6" cy="5.6" r="1.5" fill="#3c3c3c"/><path d="M11 10.5 H14 L12.5 12.5 Z" fill="#c4c4c4"/></svg>
<div class="a" style="left:1578px;top:542px;width:340px;height:1px;background:#4b4b4b"></div>
<svg class="a" style="left:1594px;top:545px;" width="14" height="14" viewBox="0 0 14 14"><circle cx="7" cy="7" r="6" fill="none" stroke="#f0a018" stroke-width="1.8"/><circle cx="7" cy="7" r="3.2" fill="#f0a018"/></svg>
<div class="a" style="left:1612px;top:546px;width:13px;height:13px;border:1px solid #1e1e1e;border-radius:2px;background:linear-gradient(#4a4a4a,#383838);box-shadow:inset 0 1px 0 #555"></div>
<svg class="a" style="left:1613px;top:546px;" width="12" height="12" viewBox="0 0 12 12"><path d="M1.8 6.2 L4.6 9.4 L10.5 1.8" fill="none" stroke="#f4f4f4" stroke-width="1.9"/></svg>
<div class="t" style="left:1628px;top:548px;font-size:11px;line-height:11px;color:#c8c8c8;letter-spacing:1.44px;font-weight:bold;">Audio Listener</div>
<svg class="a" style="left:1887px;top:546px;" width="14" height="14" viewBox="0 0 14 14"><path d="M1 2 L3 0.5 H12.5 V11.5 L10.5 13.5 H1 Z" fill="#2c4070"/><rect x="1" y="2" width="9.5" height="11.5" fill="#4d6fa8"/><path d="M10.5 2 L12.5 0.5 V11.5 L10.5 13.5 Z" fill="#6a8cc0"/><text x="5.8" y="10.5" font-size="8.5" font-family="Liberation Sans" fill="#e6eeff" text-anchor="middle">?</text></svg>
<svg class="a" style="left:1904px;top:547px;" width="14" height="14" viewBox="0 0 14 14"><g transform="translate(5.6 5.6)" fill="#c4c4c4"><circle r="3.3"/><rect x="-0.95" y="-4.9" width="1.9" height="2.6" transform="rotate(0)"/><rect x="-0.95" y="-4.9" width="1.9" height="2.6" transform="rotate(45)"/><rect x="-0.95" y="-4.9" width="1.9" height="2.6" transform="rotate(90)"/><rect x="-0.95" y="-4.9" width="1.9" height="2.6" transform="rotate(135)"/><rect x="-0.95" y="-4.9" width="1.9" height="2.6" transform="rotate(180)"/><rect x="-0.95" y="-4.9" width="1.9" height="2.6" transform="rotate(225)"/><rect x="-0.95" y="-4.9" width="1.9" height="2.6" transform="rotate(270)"/><rect x="-0.95" y="-4.9" width="1.9" height="2.6" transform="rotate(315)"/></g><circle cx="5.6" cy="5.6" r="1.5" fill="#3c3c3c"/><path d="M11 10.5 H14 L12.5 12.5 Z" fill="#c4c4c4"/></svg>
<div class="a" style="left:1578px;top:561px;width:340px;height:1px;background:#4b4b4b"></div>
<svg class="a" style="left:1582px;top:568px;" width="9" height="8" viewBox="0 0 9 8"><path d="M0 0.5 H9 L4.5 7.5 Z" fill="#747474"/></svg>
<svg class="a" style="left:1595px;top:565px;" width="12" height="14" viewBox="0 0 12 14"><path d="M0.5 0.5 H8.5 L11.5 3.5 V13.5 H0.5 Z" fill="#f2f4f6" stroke="#2a2a2a" stroke-width="0.8"/><path d="M7 4.5 A3.2 3.2 0 1 0 7 10" fill="none" stroke="#1a8ad0" stroke-width="1.7"/><path d="M6.5 5.5 V10 M8.5 5.5 V10 M5.5 6.7 H9.8 M5.5 8.7 H9.8" stroke="#1a8ad0" stroke-width="0.8"/></svg>
<div class="a" style="left:1612px;top:565px;width:13px;height:13px;border:1px solid #1e1e1e;border-radius:2px;background:linear-gradient(#4a4a4a,#383838);box-shadow:inset 0 1px 0 #555"></div>
<svg class="a" style="left:1613px;top:565px;" width="12" height="12" viewBox="0 0 12 12"><path d="M1.8 6.2 L4.6 9.4 L10.5 1.8" fill="none" stroke="#f4f4f4" stroke-width="1.9"/></svg>
<div class="t" style="left:1628px;top:567px;font-size:11px;line-height:11px;color:#c8c8c8;letter-spacing:1.24px;font-weight:bold;">Loading Scene (Script)</div>
<svg class="a" style="left:1887px;top:565px;" width="14" height="14" viewBox="0 0 14 14"><path d="M1 2 L3 0.5 H12.5 V11.5 L10.5 13.5 H1 Z" fill="#2c4070"/><rect x="1" y="2" width="9.5" height="11.5" fill="#4d6fa8"/><path d="M10.5 2 L12.5 0.5 V11.5 L10.5 13.5 Z" fill="#6a8cc0"/><text x="5.8" y="10.5" font-size="8.5" font-family="Liberation Sans" fill="#e6eeff" text-anchor="middle">?</text></svg>
<svg class="a" style="left:1904px;top:566px;" width="14" height="14" viewBox="0 0 14 14"><g transform="translate(5.6 5.6)" fill="#c4c4c4"><circle r="3.3"/><rect x="-0.95" y="-4.9" width="1.9" height="2.6" transform="rotate(0)"/><rect x="-0.95" y="-4.9" width="1.9" height="2.6" transform="rotate(45)"/><rect x="-0.95" y="-4.9" width="1.9" height="2.6" transform="rotate(90)"/><rect x="-0.95" y="-4.9" width="1.9" height="2.6" transform="rotate(135)"/><rect x="-0.95" y="-4.9" width="1.9" height="2.6" transform="rotate(180)"/><rect x="-0.95" y="-4.9" width="1.9" height="2.6" transform="rotate(225)"/><rect x="-0.95" y="-4.9" width="1.9" height="2.6" transform="rotate(270)"/><rect x="-0.95" y="-4.9" width="1.9" height="2.6" transform="rotate(315)"/></g><circle cx="5.6" cy="5.6" r="1.5" fill="#3c3c3c"/><path d="M11 10.5 H14 L12.5 12.5 Z" fill="#c4c4c4"/></svg>
<div class="t" style="left:1593px;top:583px;font-size:11px;line-height:11px;color:#767676;letter-spacing:0.8px;">Script</div>
<div class="a" style="left:1711px;top:580px;width:187px;height:15px;background:#454545;border:1px solid #303030;border-top:2px solid #1e1e1e"></div>
<svg class="a" style="left:1715px;top:583px" width="10" height="10"><rect x="0" y="0" width="10" height="10" rx="1" fill="#6a8090"/><path d="M6.5 2.5 A2.6 2.6 0 1 0 6.5 7.5" fill="none" stroke="#9ab" stroke-width="1.3"/></svg>
<div class="t" style="left:1727px;top:583px;font-size:11px;line-height:11px;color:#7a7a7a;letter-spacing:0.8px;">LoadingScene</div>
<svg class="a" style="left:1905px;top:583px;" width="9" height="9" viewBox="0 0 9 9"><circle cx="4.5" cy="4.5" r="3.7" fill="none" stroke="#a8a8a8" stroke-width="1.1"/><circle cx="4.5" cy="4.5" r="1.3" fill="#a8a8a8"/></svg>
<div class="t" style="left:1593px;top:601px;font-size:11px;line-height:11px;color:#b4b4b4;letter-spacing:0.88px;">Loading Text</div>
<div class="a" style="left:1711px;top:598px;width:187px;height:15px;background:#454545;border:1px solid #303030;border-top:2px solid #1e1e1e"></div>
<svg class="a" style="left:1714px;top:601px" width="11" height="10"><rect x="0" y="0" width="11" height="10" fill="#f0a020"/><rect x="1" y="1" width="9" height="8" fill="#f6f0e6"/><path d="M2.5 2.5 H8.5 M5.5 2.5 V8" stroke="#f0a020" stroke-width="2"/></svg>
<div class="t" style="left:1727px;top:601px;font-size:11px;line-height:11px;color:#c0c0c0;letter-spacing:0.8px;">Text (Text)</div>
<svg class="a" style="left:1905px;top:601px;" width="9" height="9" viewBox="0 0 9 9"><circle cx="4.5" cy="4.5" r="3.7" fill="none" stroke="#a8a8a8" stroke-width="1.1"/><circle cx="4.5" cy="4.5" r="1.3" fill="#a8a8a8"/></svg>
<div class="t" style="left:1593px;top:619px;font-size:11px;line-height:11px;color:#b4b4b4;letter-spacing:0.85px;">Loading Slider</div>
<div class="a" style="left:1711px;top:616px;width:187px;height:15px;background:#454545;border:1px solid #303030;border-top:2px solid #1e1e1e"></div>
<svg class="a" style="left:1714px;top:619px" width="11" height="10"><rect x="0" y="0" width="11" height="9" fill="#f0a020"/><rect x="1" y="1" width="9" height="7" fill="#e8e0d0"/><rect x="1.5" y="3" width="8" height="3" fill="#c89040"/><circle cx="4" cy="4.5" r="2" fill="#f0a020"/></svg>
<div class="t" style="left:1727px;top:619px;font-size:11px;line-height:11px;color:#c0c0c0;letter-spacing:0.8px;">Slider1 (Slider)</div>
<svg class="a" style="left:1905px;top:619px;" width="9" height="9" viewBox="0 0 9 9"><circle cx="4.5" cy="4.5" r="3.7" fill="none" stroke="#a8a8a8" stroke-width="1.1"/><circle cx="4.5" cy="4.5" r="1.3" fill="#a8a8a8"/></svg>
<div class="a" style="left:1578px;top:634px;width:340px;height:1px;background:#4b4b4b"></div>
<div class="btn" style="left:1632px;top:646px;width:228px;height:22px;background:linear-gradient(#535353,#424242)"></div>
<div class="t" style="left:1696px;top:650px;font-size:12px;line-height:12px;color:#c8c8c8;letter-spacing:1.1px;">Add Component</div>
<svg class="a" style="left:0;top:0" width="1918" height="1017" viewBox="0 0 1918 1017"><g fill="none" stroke="#f00000" stroke-width="2" stroke-linejoin="round" stroke-linecap="round"><path d="M1024.0 250.0 C1025.5 250.5 1030.0 252.1 1033.0 253.0 C1036.0 253.9 1038.9 254.7 1041.7 255.2 C1044.5 255.7 1047.2 256.0 1050.0 256.0 C1052.8 256.0 1055.6 255.7 1058.4 255.4 C1061.2 255.2 1064.2 255.0 1067.0 254.5 C1069.8 254.0 1072.8 253.4 1075.0 252.6 C1077.2 251.8 1078.6 250.6 1080.0 249.5 C1081.4 248.4 1082.5 247.2 1083.4 245.9 C1084.3 244.7 1084.7 243.3 1085.5 242.0 C1086.3 240.7 1087.6 238.7 1088.0 238.0"/><path d="M1083.0 252.3 C1089.2 254.8 1107.2 261.7 1120.0 267.0 C1132.8 272.3 1146.7 278.2 1160.0 284.2 C1173.3 290.1 1186.7 296.3 1200.0 302.7 C1213.3 309.1 1226.7 315.7 1240.0 322.5 C1253.3 329.3 1266.7 336.3 1280.0 343.5 C1293.3 350.7 1306.7 358.2 1320.0 365.9 C1333.3 373.6 1350.5 383.9 1360.0 389.6 C1369.5 395.3 1368.5 395.2 1377.0 400.0 C1385.5 404.8 1401.1 412.9 1411.1 418.3 C1421.0 423.7 1428.2 427.3 1436.7 432.4 C1445.2 437.5 1453.7 443.2 1462.2 449.0 C1470.7 454.8 1479.3 460.8 1487.8 466.9 C1496.3 472.9 1504.6 478.7 1513.3 485.3 C1522.0 491.9 1532.9 501.0 1540.0 506.3 C1547.1 511.6 1550.5 513.1 1555.7 517.3 C1561.0 521.5 1566.2 525.5 1571.5 531.5 C1576.8 537.5 1582.0 547.2 1587.2 553.5 C1592.4 559.8 1597.7 563.4 1602.9 569.2 C1608.2 575.0 1612.8 581.2 1618.7 588.1 C1624.6 595.0 1635.0 607.1 1638.3 610.9"/><path d="M1014.0 273.0 C1015.0 272.6 1018.0 271.2 1020.0 270.5 C1022.0 269.8 1023.3 269.4 1026.0 268.8 C1028.7 268.2 1032.7 267.6 1036.0 267.0 C1039.3 266.4 1043.2 265.7 1045.9 265.5 C1048.6 265.3 1051.0 265.8 1052.0 265.9"/><path d="M1030.2 267.8 C1029.2 269.2 1025.7 272.7 1024.0 276.0 C1022.4 279.3 1021.3 282.6 1020.3 287.6 C1019.3 292.7 1018.4 300.1 1017.9 306.3 C1017.4 312.5 1016.9 319.8 1017.2 325.0 C1017.5 330.2 1018.2 331.8 1019.5 337.7 C1020.8 343.6 1022.1 353.9 1024.8 360.7 C1027.5 367.5 1030.7 371.9 1035.4 378.4 C1040.1 384.9 1047.1 393.2 1053.0 399.6 C1058.9 406.0 1064.9 410.9 1070.8 416.5 C1076.7 422.1 1083.8 429.3 1088.5 433.3 C1093.2 437.3 1093.2 436.6 1099.1 440.4 C1105.0 444.2 1114.8 451.1 1123.9 456.3 C1133.1 461.5 1145.2 467.9 1154.0 471.3 C1162.8 474.7 1169.3 474.4 1177.0 476.6 C1184.7 478.8 1186.4 480.2 1200.0 484.6 C1213.6 489.0 1237.0 496.2 1258.5 502.8 C1280.0 509.4 1312.3 519.3 1329.2 524.0 C1346.1 528.7 1350.6 528.2 1360.0 530.8 C1369.4 533.4 1377.1 535.9 1385.6 539.7 C1394.1 543.5 1402.6 549.1 1411.1 553.8 C1419.6 558.5 1429.5 563.8 1436.7 567.8 C1444.0 571.8 1448.2 575.2 1454.6 578.0 C1461.0 580.8 1468.6 582.7 1475.0 584.4 C1481.4 586.1 1486.5 586.4 1492.9 588.3 C1499.3 590.2 1507.3 593.7 1513.3 596.0 C1519.3 598.3 1524.4 599.8 1528.7 602.3 C1533.0 604.8 1535.1 607.7 1538.9 611.3 C1542.7 614.9 1547.5 620.6 1551.7 624.0 C1556.0 627.4 1559.7 629.9 1564.4 631.7 C1569.1 633.5 1575.5 634.2 1579.8 634.8 C1584.1 635.4 1584.6 635.3 1590.0 635.3 C1595.4 635.2 1608.7 634.6 1612.4 634.5"/><path d="M1634.4 592.0 L1636.0 600.0 L1638.3 610.9 L1632.0 608.5 L1625.7 606.2"/><path d="M1587.2 623.5 L1600.0 627.5 L1611.6 633.7 L1602.0 638.5 L1593.5 642.4"/></g></svg>
</div>
</body></html>
